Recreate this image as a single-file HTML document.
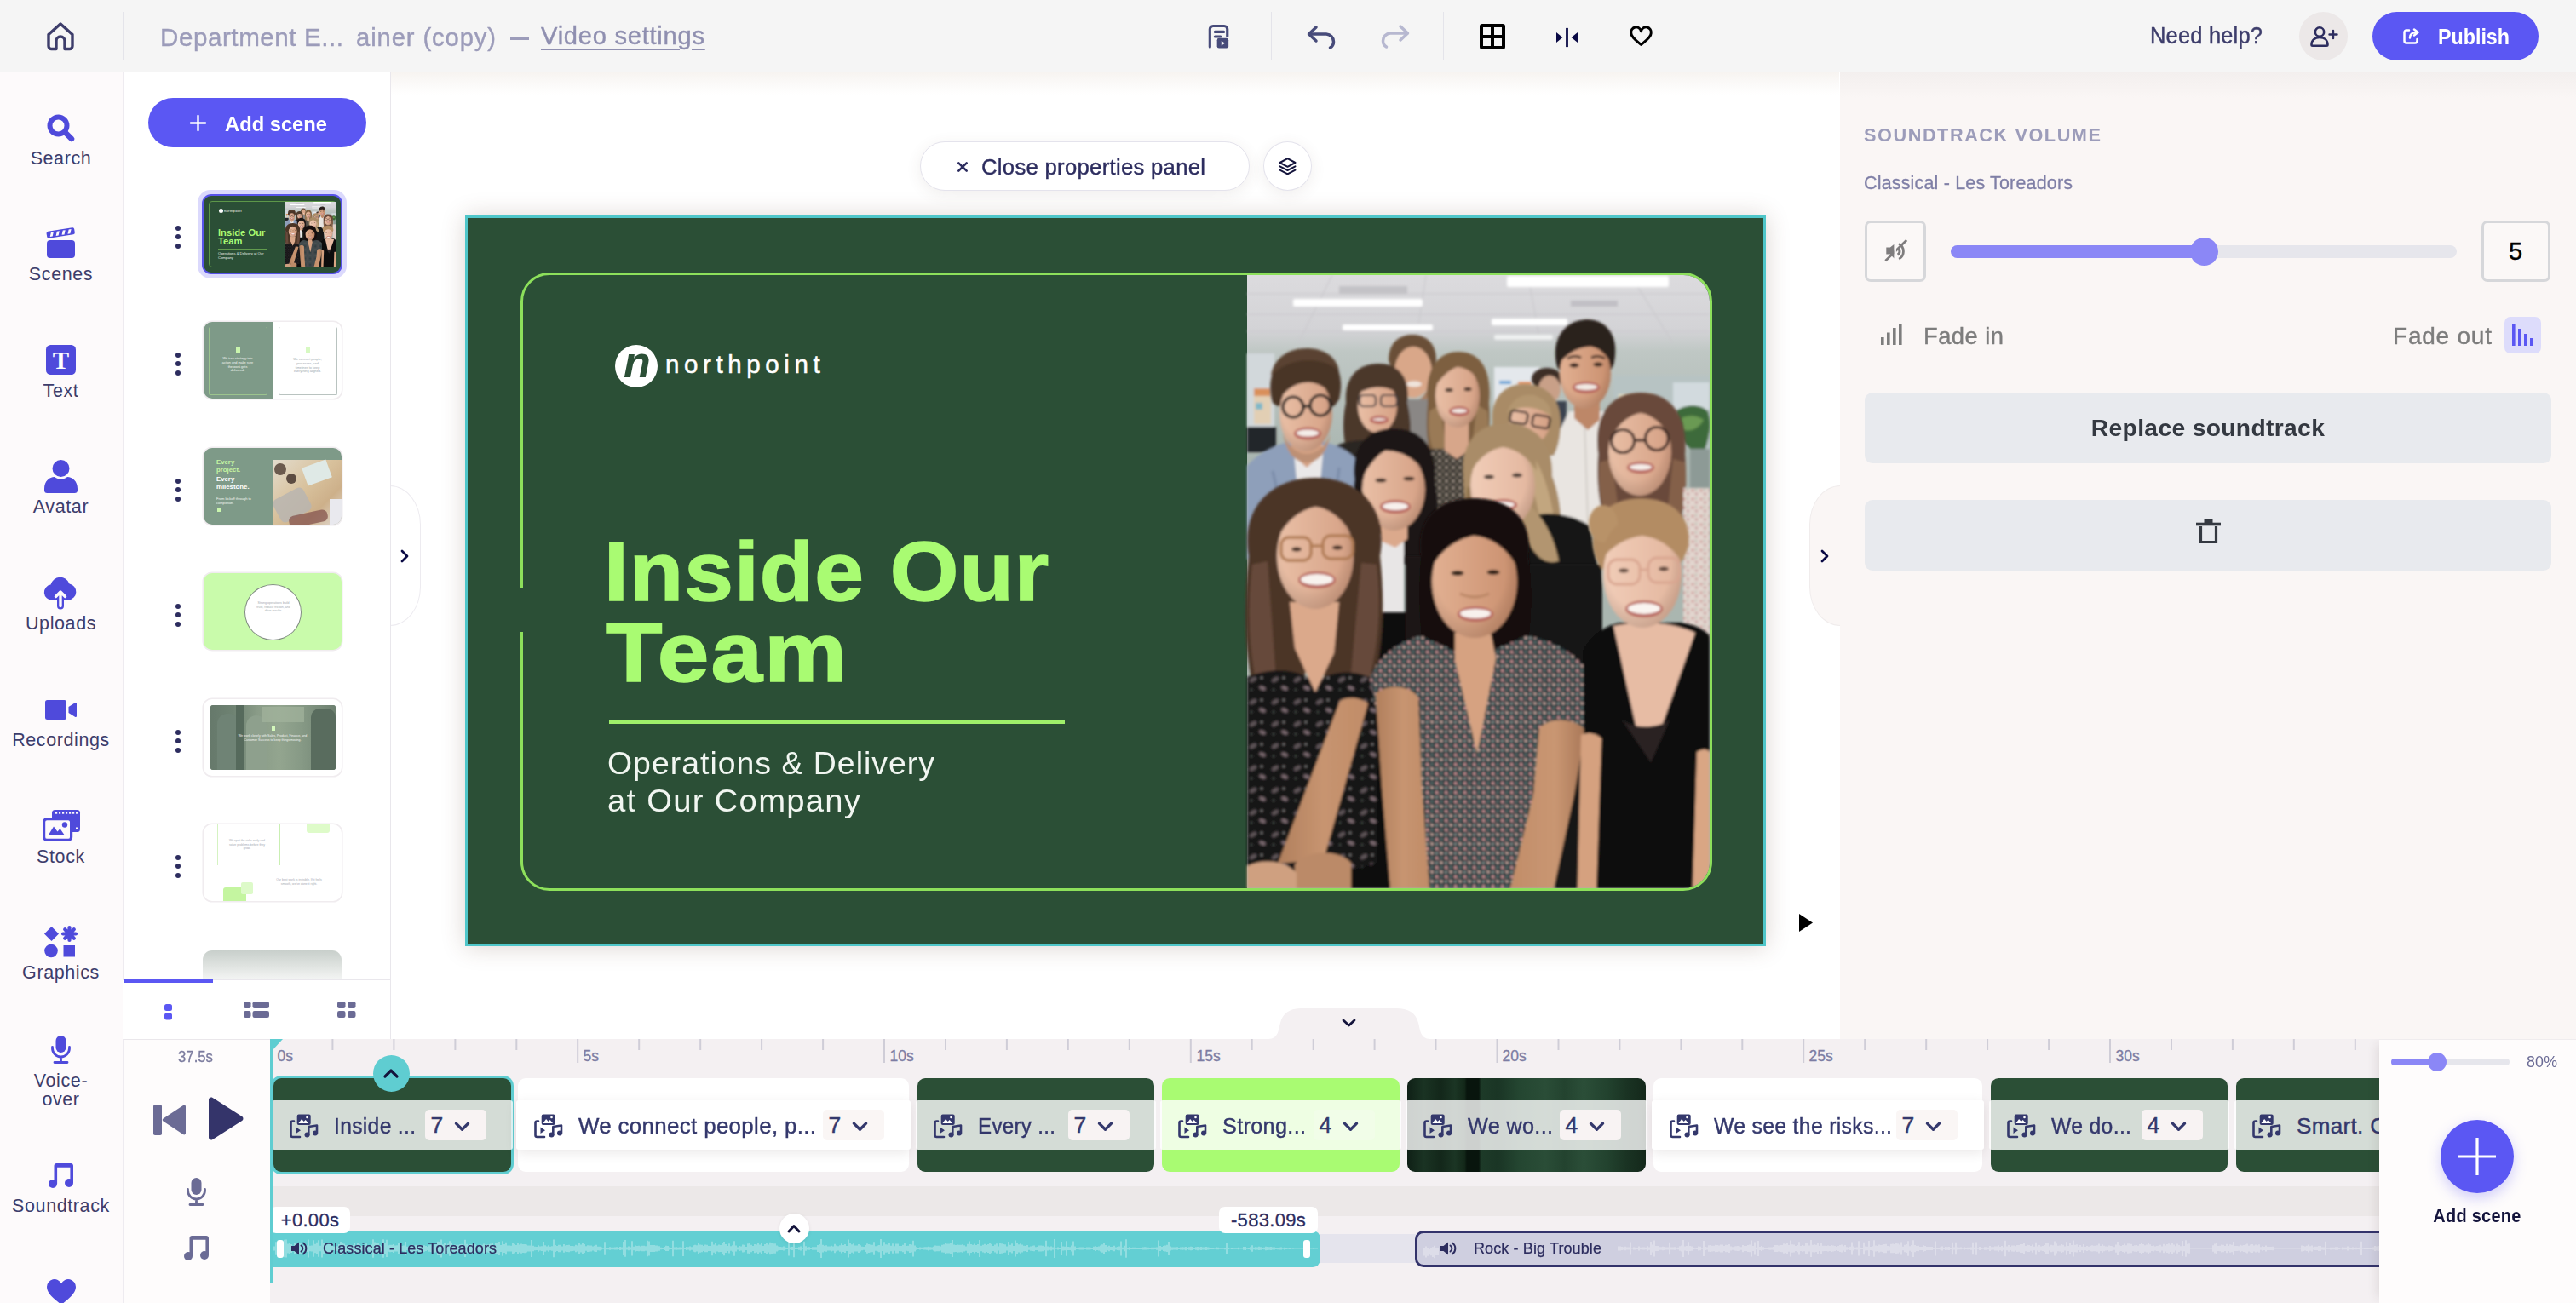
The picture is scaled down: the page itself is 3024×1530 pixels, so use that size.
<!DOCTYPE html>
<html lang="en">
<head>
<meta charset="utf-8">
<title>Video editor</title>
<style>
*{box-sizing:border-box;margin:0;padding:0}
html,body{width:3024px;height:1530px;overflow:hidden;background:#fff}
body{font-family:"Liberation Sans",sans-serif;color:#2d2d5f;position:relative}
.abs{position:absolute}
svg{display:block;overflow:visible}
.t{position:absolute;white-space:nowrap;line-height:1}
/* ---------- top bar ---------- */
#topbar{left:0;top:0;width:3024px;height:85px;background:#f5f5f5;border-bottom:1px solid #e9e2e2;z-index:30}
.vdiv{position:absolute;top:14px;width:1px;height:57px;background:#e4e4ea}
/* ---------- sidebar ---------- */
#sidebar{left:0;top:85px;width:144px;height:1445px;background:#fdfafb;z-index:20}
.sb-lab{position:absolute;left:0;width:143px;text-align:center;font-size:21.5px;color:#3d3d6b;line-height:21px;letter-spacing:.6px}
.sb-ico{position:absolute}
/* ---------- scenes panel ---------- */
#scenes{left:144px;top:85px;width:315px;height:1135px;background:#fff;border-right:1px solid #e9e7ec;box-shadow:inset 1px 0 0 #eeebf0;z-index:10;overflow:hidden}
.thumb{position:absolute;left:95px;width:162px;height:90px;border-radius:10px;overflow:hidden;box-shadow:0 0 0 1.500px #f0ecef}
.dots{position:absolute;left:62px;width:6px}
.dots i{display:block;width:6px;height:6px;border-radius:50%;background:#2d2d5f;margin-bottom:4.5px}
/* ---------- workspace ---------- */
#work{left:459px;top:85px;width:1700px;height:1135px;background:linear-gradient(#f7f4f1 0,#fff 26px);z-index:5}
/* ---------- props ---------- */
#props{left:2160px;top:85px;width:864px;height:1135px;background:linear-gradient(#f3efee 0,#faf6f5 30px);z-index:6}
/* ---------- timeline ---------- */
#tl{left:144px;top:1220px;width:2880px;height:310px;background:#f4f0f2;z-index:8;overflow:hidden}

.rl{font-size:17.500px;color:#7d7da3;letter-spacing:0;-webkit-text-stroke:.3px #7d7da3;margin-left:1.500px}
.clip{height:110px;border-radius:9px}
.band{height:58px;border-radius:3px}
.ci{top:14.500px;margin-left:2.300px}
.ct{top:16.500px;font-size:26px;color:#34386c;letter-spacing:.35px;transform-origin:0 0;-webkit-text-stroke:.4px #34386c}
.db{top:11px;width:72px;height:36px;border-radius:5px}
.db span{position:absolute;left:6.500px;top:5px;font-size:26.500px;line-height:1;color:#34386c;-webkit-text-stroke:.45px #34386c}
.db svg{position:absolute;left:33.500px;top:13.500px}
.tlab{height:31px;border-radius:7px;background:#fff;font-size:22px;line-height:31px;text-align:center;color:#2d2d5f;letter-spacing:.3px;-webkit-text-stroke:.3px #2d2d5f}
</style>
</head>
<body>
<svg width="0" height="0" style="position:absolute"><defs><g id="photo">
<defs>
<linearGradient id="bgw" x1="0" y1="0" x2="0" y2="1"><stop offset="0" stop-color="#dcdbde"/><stop offset=".09" stop-color="#d3d3d6"/><stop offset=".125" stop-color="#bfc7c4"/><stop offset=".3" stop-color="#aab6b0"/></linearGradient>
<linearGradient id="skA" x1="0" y1="0" x2="1" y2="0"><stop offset="0" stop-color="#e9bfa6"/><stop offset="1" stop-color="#d5a084"/></linearGradient>
<linearGradient id="skB" x1="0" y1="0" x2="1" y2="0"><stop offset="0" stop-color="#e2b092"/><stop offset="1" stop-color="#c98f6e"/></linearGradient>
<linearGradient id="skC" x1="0" y1="0" x2="1" y2="0"><stop offset="0" stop-color="#f1cdb8"/><stop offset="1" stop-color="#e2b59d"/></linearGradient>
<pattern id="flo1" width="11" height="11" patternUnits="userSpaceOnUse"><rect width="11" height="11" fill="#223438"/><circle cx="2.600" cy="2.600" r="1.800" fill="#dd9fa0"/><circle cx="8.100" cy="7.900" r="1.700" fill="#e9c0b6"/><circle cx="8" cy="2.300" r="1.100" fill="#93a8a2"/><circle cx="2.400" cy="8.200" r="1.100" fill="#cfd6d0"/><circle cx="5.400" cy="5.400" r=".8" fill="#c98b90"/></pattern>
<pattern id="flo2" width="26" height="26" patternUnits="userSpaceOnUse"><rect width="26" height="26" fill="#141315"/><ellipse cx="7" cy="7" rx="4.500" ry="2.400" fill="#5f5458" transform="rotate(-30 7 7)"/><ellipse cx="18" cy="17" rx="4" ry="2.200" fill="#7c6a70" transform="rotate(25 18 17)"/><circle cx="17" cy="5" r="1.100" fill="#a9a3a6"/><circle cx="5" cy="19" r="1.200" fill="#49524f"/></pattern>
<pattern id="flo3" width="10" height="10" patternUnits="userSpaceOnUse"><rect width="10" height="10" fill="#e2d6cf"/><circle cx="3" cy="3" r="1.500" fill="#c98a86"/><circle cx="7.500" cy="7" r="1.300" fill="#b86f74"/><circle cx="7" cy="2" r=".9" fill="#8fa08a"/></pattern>
<pattern id="flo4" width="8" height="8" patternUnits="userSpaceOnUse"><rect width="8" height="8" fill="#3f3b36"/><circle cx="2" cy="2" r="1.400" fill="#b9ab9c"/><circle cx="6" cy="6" r="1.200" fill="#8a8274"/></pattern>
<filter id="pb" x="-5%" y="-5%" width="110%" height="110%"><feGaussianBlur stdDeviation="1.500"/></filter>
<linearGradient id="skArm" x1="0" y1="0" x2="1" y2="0"><stop offset="0" stop-color="#b07f5d"/><stop offset=".5" stop-color="#c79470"/><stop offset="1" stop-color="#c08c68"/></linearGradient><linearGradient id="skArm2" x1="0" y1="0" x2="1" y2="0"><stop offset="0" stop-color="#c18d69"/><stop offset=".6" stop-color="#c99672"/><stop offset="1" stop-color="#a87757"/></linearGradient>
<radialGradient id="fsh" cx=".45" cy=".4" r=".75"><stop offset=".55" stop-color="#000" stop-opacity="0"/><stop offset="1" stop-color="#5a2f1a" stop-opacity=".28"/></radialGradient>
</defs>
<rect width="543" height="720" fill="url(#bgw)"/>
<g filter="url(#pb)">
<!-- ceiling grid + lights -->
<g stroke="#c9c8cc" stroke-width="1.200" fill="none"><path d="M0 22h543M0 46h543M0 66h543M100 0l-40 80M210 0l-12 80M330 0l14 80M450 0l50 80"/></g>
<g fill="#fff"><rect x="305" y="1" width="190" height="13" rx="2"/><rect x="54" y="28" width="152" height="9" rx="2"/><rect x="112" y="58" width="106" height="7" rx="2"/><rect x="287" y="51" width="89" height="8" rx="2"/><rect x="290" y="70" width="69" height="6" rx="2" fill="#eef0f0"/></g>
<rect x="108" y="13" width="80" height="9" fill="#c3c2c6"/><rect x="380" y="30" width="55" height="7" fill="#c1c0c5"/>
<!-- back wall stuff -->
<rect x="0" y="92" width="32" height="112" fill="#d2d8db"/><rect x="8" y="135" width="20" height="40" fill="#e2cfb4"/><rect x="8" y="133" width="20" height="9" fill="#d98f5a"/><rect x="10" y="150" width="8" height="8" fill="#7fb8c8"/>
<rect x="0" y="178" width="34" height="30" fill="#22252a"/>
<rect x="290" y="108" width="54" height="46" fill="#e4e8ec"/><rect x="318" y="125" width="16" height="6" fill="#e49a6a"/><rect x="296" y="124" width="14" height="4" fill="#6aa6d8"/>
<rect x="430" y="118" width="113" height="86" fill="#b7c3c3"/><rect x="500" y="126" width="43" height="32" fill="#d2dade"/><rect x="436" y="140" width="40" height="8" fill="#e4e0c8"/>
<path d="M503 160c10-8 28-10 38 0 4 14 2 30-4 46-14 4-26-6-30-22-2-8-4-16-4-24z" fill="#3e6b3a"/>
<path d="M510 168c8-4 18-4 26 2-6 10-14 14-24 12z" fill="#6a9a52"/>
<rect x="520" y="204" width="23" height="48" fill="#8d9a96"/>
</g>
<g filter="url(#pb)">
<!-- P3 man back -->
<path d="M166 100c0-20 12-30 28-30s28 10 28 30l-4 12h-48z" fill="#6a5038"/>
<ellipse cx="195" cy="114" rx="22" ry="30" fill="#d9a789"/>
<path d="M175 122c4 20 12 26 20 26s16-6 20-26c-2 30-10 38-20 38s-18-8-20-38z" fill="#a67d60"/>
<ellipse cx="196" cy="128" rx="9" ry="3.500" fill="#efe4dc"/>
<rect x="178" y="146" width="38" height="56" fill="#8a8785"/>
<!-- P6 far back small -->
<ellipse cx="352" cy="122" rx="18" ry="13" fill="#3d2e26"/>
<ellipse cx="355" cy="134" rx="13" ry="16" fill="#c9a088"/>
<rect x="343" y="148" width="32" height="46" fill="#3b4250"/>
<!-- P7 tall man -->
<path d="M356 204 378 160h48l8 44 6 96h-84z" fill="#e9e5e1"/>
<path d="M396 170l4 120" stroke="#d2cdc8" stroke-width="2" fill="none"/>
<path d="M384 140h30v30l-14 12-16-14z" fill="#bd8767"/>
<path d="M364 108c-8-30 6-54 34-56 26 0 40 22 32 54l-6 10h-54z" fill="#2b201b"/>
<ellipse cx="397" cy="116" rx="30" ry="41" fill="url(#skB)"/><ellipse cx="397" cy="116" rx="30" ry="41" fill="url(#fsh)"/>
<path d="M366 104c2-24 16-34 32-34 18 0 30 12 30 34-8-12-14-18-24-20-14 0-26 6-38 20z" fill="#2b201b"/>
<ellipse cx="398.0" cy="132.0" rx="16.0" ry="7.0" fill="#b8645c"/><ellipse cx="398.0" cy="131.5" rx="13.0" ry="3.5" fill="#f3ece6"/>
<ellipse cx="384" cy="106" rx="5.500" ry="2.600" fill="#2a1c16"/><ellipse cx="412" cy="105" rx="5.500" ry="2.600" fill="#2a1c16"/>
<path d="M376 98q8-5 16-1M404 97q8-4 16 1" stroke="#2a1c16" stroke-width="2.600" fill="none"/>
<!-- P2 glasses long hair -->
<path d="M116 150c-2-30 14-46 38-46s38 16 34 46c4 18 6 34 0 52h-72c-4-16-4-34 0-52z" fill="#4c392b"/>
<ellipse cx="153" cy="154" rx="23" ry="31" fill="url(#skA)"/>
<path d="M128 140c4-18 16-26 28-24 14 2 20 10 22 24-12-10-30-12-50 0z" fill="#4c392b"/>
<g fill="none" stroke="#3a3a40" stroke-width="2.200"><rect x="132" y="141" width="19" height="13" rx="4"/><rect x="157" y="141" width="19" height="13" rx="4"/></g>
<ellipse cx="155.0" cy="170.0" rx="11.0" ry="5.0" fill="#b8645c"/><ellipse cx="155.0" cy="169.5" rx="8.0" ry="1.5" fill="#f0e6e0"/>
<path d="M98 204c20-14 64-14 94 0v22H98z" fill="#2a2523"/>
<!-- P5 blonde with glasses -->
<path d="M288 172c-2-28 14-44 38-44s42 16 42 44c0 16-2 28-8 40h-68c-4-12-4-26-4-40z" fill="#a98b66"/>
<ellipse cx="332" cy="170" rx="24" ry="29" fill="url(#skA)"/>
<path d="M305 162c6-18 20-24 34-20 12 4 18 12 18 24-16-12-34-14-52-4z" fill="#b3966f"/>
<g fill="none" stroke="#2e2422" stroke-width="2.400"><rect x="309" y="160" width="20" height="14" rx="4" transform="rotate(10 319 167)"/><rect x="335" y="165" width="20" height="14" rx="4" transform="rotate(10 345 172)"/></g>
<!-- P4 woman center -->
<path d="M212 150c-4-36 10-60 36-60s40 22 36 60c2 22 0 42-6 62h-62c-6-18-6-40-4-62z" fill="#7d5e3f"/>
<path d="M214 160c-2 20 0 36 6 50l14-8-8-50zM282 160c2 18 0 34-6 50l-12-10 6-48z" fill="#9a7a56"/>
<rect x="214" y="204" width="50" height="72" fill="url(#flo4)"/>
<path d="M232 172h28v34l-14 10-14-10z" fill="#d7a68a"/>
<ellipse cx="247" cy="142" rx="26" ry="37" fill="url(#skA)"/><ellipse cx="247" cy="142" rx="26" ry="37" fill="url(#fsh)"/>
<path d="M220 132c2-26 14-36 28-36 16 0 26 12 28 32-10-14-20-20-30-20-10 4-18 12-26 24z" fill="#7d5e3f"/>
<ellipse cx="249.0" cy="160.0" rx="12.0" ry="6.0" fill="#b8645c"/><ellipse cx="249.0" cy="159.5" rx="9.0" ry="2.5" fill="#f4ece7"/>
<ellipse cx="237" cy="135" rx="4.500" ry="2.200" fill="#3a2a20"/><ellipse cx="259" cy="134" rx="4.500" ry="2.200" fill="#3a2a20"/>
<!-- P1 man left -->
<path d="M0 224c14-16 34-26 50-28h40c20 4 36 14 46 30l-4 108H0z" fill="#8e9fba"/>
<path d="M30 230l16 70M108 226l-10 80" stroke="#7a8ba8" stroke-width="3" fill="none"/>
<path d="M54 200h36l-4 42-14 8-14-10z" fill="#eae8e8"/>
<path d="M52 186h36v24l-18 16-18-16z" fill="#d4a183"/>
<path d="M30 150c-10-34 8-62 40-62 30 0 46 24 38 58l-6 8H36z" fill="#4a3426"/><path d="M28 118c4-22 22-32 42-32 18 0 34 8 38 26-10-8-22-12-36-12-16 0-32 6-44 18z" fill="#5a4232"/>
<ellipse cx="69" cy="163" rx="31" ry="44" fill="url(#skA)"/><ellipse cx="69" cy="163" rx="31" ry="44" fill="url(#fsh)"/>
<path d="M36 148c0-28 14-42 34-42s34 14 34 40c-8-12-20-20-32-20-14 0-26 8-36 22z" fill="#4a3426"/>
<g fill="none" stroke="#1e1b1c" stroke-width="3.200"><circle cx="54" cy="155" r="12"/><circle cx="86" cy="153" r="12"/><path d="M66 154h8"/></g>
<ellipse cx="71.0" cy="186.0" rx="16.0" ry="7.5" fill="#b8645c"/><ellipse cx="71.0" cy="185.5" rx="13.0" ry="4.0" fill="#f5efea"/>
<path d="M42 186c6 16 18 24 28 24s22-8 28-24c-4 22-14 34-28 34s-24-12-28-34z" fill="#bd9075"/>
<!-- P8 woman right w glasses -->
<path d="M412 210c-6-44 14-72 50-72s56 28 52 72c2 30 2 54-6 80h-88c-8-26-10-50-8-80z" fill="#69493a"/>
<path d="M414 220c-2 26 0 46 8 66l14-10-8-60zM514 220c2 24 0 46-6 66l-14-10 6-60z" fill="#84614a"/>
<rect x="512" y="250" width="31" height="180" fill="url(#flo3)"/>
<ellipse cx="461" cy="208" rx="37" ry="51" fill="url(#skA)"/><ellipse cx="461" cy="208" rx="37" ry="51" fill="url(#fsh)"/>
<path d="M424 196c0-34 16-52 38-52 24 0 38 18 38 52-10-20-24-32-38-34-14 2-28 14-38 34z" fill="#69493a"/>
<g fill="none" stroke="#3a2824" stroke-width="3.200"><circle cx="441" cy="195" r="13.500"/><circle cx="481" cy="192" r="13.500"/><path d="M454.500 194h13"/></g>
<ellipse cx="462.0" cy="226.0" rx="16.0" ry="7.0" fill="#b8645c"/><ellipse cx="462.0" cy="225.5" rx="13.0" ry="3.5" fill="#f6eeea"/>
<!-- P9 asian woman left-mid -->
<path d="M126 240c-4-40 16-60 46-60s52 20 48 60c6 36 6 70-2 100h-84c-10-30-12-64-8-100z" fill="#1b1513"/>
<path d="M140 304h44v96h-34z" fill="#e8e6e6"/>
<path d="M156 290h32v20l-14 10-18-8z" fill="#dba98c"/>
<ellipse cx="172" cy="252" rx="37" ry="48" fill="url(#skA)"/><ellipse cx="172" cy="252" rx="37" ry="48" fill="url(#fsh)"/>
<path d="M134 240c2-36 18-52 40-52 20 0 36 16 38 48-12-18-28-30-50-30-10 6-20 18-28 34z" fill="#1b1513"/>
<ellipse cx="174.0" cy="272.0" rx="18.0" ry="8.0" fill="#b8645c"/><ellipse cx="174.0" cy="271.5" rx="15.0" ry="4.5" fill="#f7f0ec"/>
<ellipse cx="157" cy="241" rx="6.500" ry="2.300" fill="#2a1c16"/><ellipse cx="190" cy="239" rx="6.500" ry="2.300" fill="#2a1c16"/>
<!-- P10 blonde center -->
<path d="M254 236c-4-40 18-62 50-62s56 22 54 62c10 24 14 60 8 100h-40l-60-30c-8-20-12-44-12-70z" fill="#a98c67"/>
<path d="M326 200c20 20 34 60 40 130l-16 4c-4-50-14-90-30-120z" fill="#c2a67f"/>
<path d="M258 250c-2 20 2 36 8 50l12-6-10-50z" fill="#8f744f"/>
<path d="M320 288c24-12 56-10 82 6l14 70v100h-100z" fill="#141414"/>
<path d="M322 262c18 14 36 34 44 74-20 6-34-12-44-42z" fill="#b29570"/>
<ellipse cx="300" cy="248" rx="38" ry="50" fill="url(#skC)"/><ellipse cx="300" cy="248" rx="38" ry="50" fill="url(#fsh)"/>
<path d="M262 232c2-36 20-52 42-52 22 2 36 20 36 50-10-16-24-26-40-28-14 2-28 12-38 30z" fill="#a98c67"/>
<ellipse cx="301.0" cy="270.0" rx="16.0" ry="7.0" fill="#b8645c"/><ellipse cx="301.0" cy="269.5" rx="13.0" ry="3.5" fill="#f7efeb"/>
<ellipse cx="284" cy="237" rx="6" ry="2.500" fill="#4a3a34"/><ellipse cx="317" cy="235" rx="6" ry="2.500" fill="#4a3a34"/>
</g>
<g filter="url(#pb)">
<!-- dark base between front-row people -->
<rect x="112" y="396" width="100" height="324" fill="#0e0e0f"/>
<rect x="326" y="340" width="90" height="380" fill="#121212"/>
<rect x="186" y="330" width="30" height="100" fill="#1a1615"/>
<!-- P11 bottom-left woman -->
<path d="M2 330c-10-56 26-92 78-92s86 36 76 92c6 56 4 110-10 158H96l-16-50-20 50H8C-4 440-4 386 2 330z" fill="#4b3425"/>
<path d="M6 340c-6 50-4 100 6 146l22-10-10-140zM152 340c6 48 2 96-10 140l-20-12 12-130z" fill="#66493a"/>
<path d="M0 472c30-12 60-10 80 6 20-14 46-16 72-2v214l-40 12H0z" fill="url(#flo2)"/>
<path d="M50 384h58l-6 60-22 46-24-52z" fill="#dba98b"/>
<ellipse cx="80" cy="330" rx="45" ry="62" fill="url(#skA)"/><ellipse cx="80" cy="330" rx="45" ry="62" fill="url(#fsh)"/>
<path d="M34 312c2-42 22-58 48-58 26 2 44 22 44 56-12-22-28-36-46-38-18 4-34 16-46 40z" fill="#4b3425"/>
<g fill="none" stroke="#b07c54" stroke-width="3.400"><rect x="40" y="308" width="35" height="27" rx="9"/><rect x="89" y="306" width="35" height="27" rx="9"/><path d="M75 318h14"/></g>
<ellipse cx="82.0" cy="358.0" rx="22.0" ry="10.0" fill="#b8645c"/><ellipse cx="82.0" cy="357.5" rx="19.0" ry="6.5" fill="#f8f2ee"/>
<ellipse cx="58" cy="322" rx="6" ry="2.600" fill="#3a261c"/><ellipse cx="106" cy="320" rx="6" ry="2.600" fill="#3a261c"/>
<path d="M109 500c10-6 24-4 33 3L90 686l-54 5z" fill="url(#skArm)"/>
<path d="M56 692c14-18 52-18 66-2v30H56z" fill="#bb8a68"/><path d="M0 694c20-10 46-6 58 8v18H0z" fill="#cfa080"/>
<path d="M0 520c20 0 56 30 56 80l-18 84H0z" fill="url(#flo2)"/>
<!-- P12 center woman -->
<path d="M204 330c-6-44 20-68 62-68s70 24 64 68c6 46 4 92-8 138h-34l-22-30-24 34h-30c-10-48-12-96-8-142z" fill="#17110f"/>
<path d="M144 474c10-30 40-46 60-50l46 20h30l48-20c30 4 64 20 84 60l-14 62-44-10 8 184H196l4-186-40 16z" fill="url(#flo1)"/>
<path d="M244 420h42l6 30-22 112-26-110z" fill="#d6a281"/>
<ellipse cx="267" cy="360" rx="50" ry="66" fill="url(#skB)"/><ellipse cx="267" cy="360" rx="50" ry="66" fill="url(#fsh)"/>
<path d="M216 344c2-42 24-60 52-60 28 2 48 24 50 60-12-22-30-36-52-38-20 4-38 16-50 38z" fill="#17110f"/>
<ellipse cx="268.0" cy="398.0" rx="21.0" ry="9.0" fill="#b8645c"/><ellipse cx="268.0" cy="397.5" rx="18.0" ry="5.5" fill="#f8f1ed"/>
<ellipse cx="247" cy="350" rx="7.500" ry="2.800" fill="#22140f"/><ellipse cx="289" cy="349" rx="7.500" ry="2.800" fill="#22140f"/>
<path d="M250 374q17 8 34 0" stroke="#b88463" stroke-width="3" fill="none"/>
<path d="M151 492c10-12 40-12 50 4l4 104 9 120h-46l-10-120z" fill="url(#skArm)"/>
<path d="M343 532c13-14 42-12 54 2l-13 76-24 110h-51l27-110z" fill="url(#skArm2)"/>
<!-- P13 bottom-right woman -->
<path d="M406 320c-4-36 20-58 56-58s60 20 56 56c-4 14-10 22-16 28h-84c-6-6-10-14-12-26z" fill="#b38c63"/>
<ellipse cx="418" cy="292" rx="17" ry="22" fill="#b89268"/>
<path d="M394 442c10-20 30-32 44-34h70c16 2 30 8 35 16v296H398z" fill="#111111"/>
<path d="M430 412c30-6 66-6 96 8l-40 112-14 26-16-30z" fill="#e7bca4"/>
<path d="M440 522c10 10 40 12 56 0l-22 50z" fill="#2a2223"/>
<ellipse cx="464" cy="352" rx="46" ry="62" fill="url(#skC)"/><ellipse cx="464" cy="352" rx="46" ry="62" fill="url(#fsh)"/>
<path d="M416 334c4-36 24-50 48-50 26 2 44 20 46 52-12-18-28-28-46-30-18 2-36 12-48 28z" fill="#b38c63"/>
<g fill="none" stroke="#d9a590" stroke-width="2.800"><rect x="424" y="334" width="37" height="29" rx="10"/><rect x="471" y="332" width="37" height="29" rx="10"/><path d="M461 346h10"/></g>
<ellipse cx="442" cy="347" rx="6" ry="2.600" fill="#5a4238"/><ellipse cx="489" cy="345" rx="6" ry="2.600" fill="#5a4238"/>
<ellipse cx="466.0" cy="392.0" rx="22.0" ry="10.0" fill="#b8645c"/><ellipse cx="466.0" cy="391.5" rx="19.0" ry="6.5" fill="#faf4f0"/>
<path d="M392 540c8-4 18-2 24 4l-6 176h-22z" fill="#d5a17f"/>
<path d="M528 560c6-4 12-4 15 0v160h-20z" fill="#d9a684"/>
</g>
</g></defs></svg>

<!-- ================= TOP BAR ================= -->
<div id="topbar" class="abs">
  <div class="vdiv" style="left:144px"></div>
  <svg class="abs" style="left:54px;top:25px" width="34" height="35" viewBox="0 0 34 35" fill="none" stroke="#3d3d6b" stroke-width="3.4" stroke-linejoin="round" stroke-linecap="round"><path d="M3 15.5 17 3l14 12.500V29a3.500 3.500 0 0 1-3.500 3.500H22V23a5 5 0 0 0-10 0v9.500H6.500A3.500 3.500 0 0 1 3 29z"/></svg>
  <div class="t" id="ttl1" style="left:188px;top:30px;font-size:29px;color:#9c9cba;letter-spacing:.55px;-webkit-text-stroke:.4px #9c9cba;transform:scaleX(1.0200);transform-origin:0 0">Department E...</div>
  <div class="t" id="ttl2" style="left:418px;top:30px;font-size:29px;color:#9c9cba;letter-spacing:.9px;-webkit-text-stroke:.4px #9c9cba;transform:scaleX(1.0060);transform-origin:0 0">ainer (copy)</div>
  <div class="abs" style="left:599px;top:44px;width:22px;height:2.500px;background:#9c9cba"></div>
  <div class="t" id="ttl3" style="left:635px;top:28px;font-size:29px;color:#8f8fb0;letter-spacing:.75px;text-decoration:underline;text-decoration-thickness:2px;text-underline-offset:5px;-webkit-text-stroke:.4px #8f8fb0;transform:scaleX(1.0031);transform-origin:0 0">Video settings</div>
  <!-- script icon -->
  <svg class="abs" style="left:1418px;top:28px" width="26" height="30" viewBox="0 0 28 31" fill="none" stroke="#474b7a" stroke-width="3.400" stroke-linecap="round" stroke-linejoin="round"><path d="M2.500 28.500V6a4 4 0 0 1 4-4h14a4 4 0 0 1 4 4v9"/><path d="M9 9.500h11M9 15.500h7"/><rect x="11.500" y="17.500" width="14.500" height="12.500" rx="2.500" fill="#474b7a" stroke="none"/><path d="M17 20.800v6l4.500-3z" fill="#f5f5f5" stroke="none"/></svg>
  <div class="vdiv" style="left:1492px"></div>
  <!-- undo -->
  <svg class="abs" style="left:1533.500px;top:30px" width="35" height="28" viewBox="0 0 35 28" fill="none" stroke="#474b7a" stroke-width="3.500" stroke-linecap="round" stroke-linejoin="round"><path d="M11 2 2.500 10 11 18"/><path d="M3 10h20a9 9 0 0 1 8.500 9c0 3-1.500 5.500-4 7"/></svg>
  <!-- redo -->
  <svg class="abs" style="left:1619.500px;top:29px" width="35" height="28" viewBox="0 0 35 28" fill="none" stroke="#b7b8d0" stroke-width="3.500" stroke-linecap="round" stroke-linejoin="round"><path d="M24 2l8.500 8L24 18"/><path d="M32 10H12a9 9 0 0 0-8.500 9c0 3 1.500 5.500 4 7"/></svg>
  <div class="vdiv" style="left:1694px"></div>
  <!-- grid -->
  <svg class="abs" style="left:1737px;top:28px" width="30" height="30" viewBox="0 0 30 30" fill="none" stroke="#000" stroke-width="4"><rect x="2" y="2" width="26" height="26" rx="1"/><path d="M15 2v26M2 15h26"/></svg>
  <!-- split -->
  <svg class="abs" style="left:1826.500px;top:32px" width="25" height="24" viewBox="0 0 27 24" fill="#0a0a45"><rect x="12" y="0" width="3" height="24"/><path d="M0 5.500 8 12 0 18.500zM27 5.500 19 12l8 6.500z"/></svg>
  <!-- heart -->
  <svg class="abs" style="left:1913px;top:31px" width="27" height="24" viewBox="0 0 30 26" fill="none" stroke="#000" stroke-width="3.300" stroke-linejoin="round"><path d="M15 23.500C8.500 18 2 13.500 2 8.500A6.500 6.500 0 0 1 15 6a6.500 6.500 0 0 1 13 2.500c0 5-6.500 9.500-13 15z"/></svg>
  <div class="t" id="help" style="left:2524px;top:29px;font-size:27px;color:#3d3d6b;letter-spacing:0.2px;-webkit-text-stroke:.45px #3d3d6b;transform:scaleX(0.9434);transform-origin:0 0">Need help?</div>
  <div class="abs" style="left:2699px;top:14px;width:57px;height:57px;border-radius:50%;background:#ece8e8"></div>
  <svg class="abs" style="left:2712px;top:31px" width="33" height="24" viewBox="0 0 33 24" fill="none" stroke="#2d2d5f" stroke-width="2.600" stroke-linecap="round" stroke-linejoin="round"><circle cx="11" cy="6.500" r="5.200"/><path d="M1.500 21.500c0-5.500 4-8.500 9.500-8.500s9.500 3 9.500 8.500c0 .8-.6 1.200-1.300 1.200H2.800c-.7 0-1.300-.4-1.300-1.200z"/><path d="M27 5v9M22.500 9.500h9" stroke-width="2.400"/></svg>
  <div class="abs" style="left:2785px;top:14px;width:195px;height:57px;border-radius:29px;background:#5b57f3"></div>
  <svg class="abs" style="left:2821px;top:33px" width="21" height="19" viewBox="0 0 21 19" fill="none" stroke="#fff" stroke-width="2.500" stroke-linecap="round" stroke-linejoin="round"><path d="M7 2.500H4a2.500 2.500 0 0 0-2.500 2.500v10A2.500 2.500 0 0 0 4 17.500h10a2.500 2.500 0 0 0 2.500-2.500v-2"/><path d="M8 11.500c0-4.500 3-6.500 8-6.500M13 1.500l4.500 3.500-4.500 3.500" /></svg>
  <div class="t" id="pub" style="left:2862px;top:30px;font-size:26px;font-weight:bold;color:#fff;letter-spacing:0px;transform:scaleX(0.8945);transform-origin:0 0">Publish</div>
</div>

<!-- ================= SIDEBAR ================= -->
<div id="sidebar" class="abs">
  <!-- Search -->
  <svg class="sb-ico" style="left:55px;top:49px" width="33" height="33" viewBox="0 0 33 33" fill="none" stroke="#4f4adb" stroke-linecap="round"><circle cx="13.500" cy="13.500" r="10" stroke-width="6"/><path d="M21.500 21.500 29 29" stroke-width="6.500"/></svg>
  <div class="sb-lab" style="top:91px">Search</div>
  <!-- Scenes -->
  <svg class="sb-ico" style="left:55px;top:183px" width="34" height="36" viewBox="0 0 34 36" fill="#4f4adb"><rect x="0" y="14" width="33" height="21" rx="4"/><g transform="rotate(-9 1 12)"><rect x="0.500" y="4" width="33" height="8" rx="2"/><g fill="#fdfafb"><path d="M6 5.500h3l-2 5h-3zM13 5.500h3l-2 5h-3zM20 5.500h3l-2 5h-3zM27 5.500h3l-2 5h-3z"/></g></g></svg>
  <div class="sb-lab" style="top:227px">Scenes</div>
  <!-- Text -->
  <svg class="sb-ico" style="left:54px;top:320px" width="35" height="35" viewBox="0 0 35 35"><rect width="35" height="35" rx="5.500" fill="#4f4adb"/><text x="17.500" y="27.500" text-anchor="middle" font-family="Liberation Serif,serif" font-weight="bold" font-size="29" fill="#fff">T</text></svg>
  <div class="sb-lab" style="top:364px">Text</div>
  <!-- Avatar -->
  <svg class="sb-ico" style="left:52px;top:455px" width="39" height="39" viewBox="0 0 39 39" fill="#4f4adb"><circle cx="19.500" cy="10" r="10"/><path d="M0 34c0-9 6-14 12-14 2.500 2 5 2.500 7.500 2.500S24.500 22 27 20c6 0 12 5 12 14v1.500a3.500 3.500 0 0 1-3.500 3.500h-32A3.500 3.500 0 0 1 0 35.500z"/></svg>
  <div class="sb-lab" style="top:500px">Avatar</div>
  <!-- Uploads -->
  <svg class="sb-ico" style="left:52px;top:593px" width="38" height="37" viewBox="0 0 38 37"><path fill="#4f4adb" d="M9 26.500a9 9 0 0 1-1.500-17.900A11.500 11.500 0 0 1 29.500 7.500 9.600 9.600 0 0 1 28.500 26.500z"/><path d="M19 33.500V18M13 22.500l6-6 6 6" fill="none" stroke="#4f4adb" stroke-width="8" stroke-linecap="round" stroke-linejoin="round"/><path d="M19 33.500V17.500M13.500 22.500l5.500-5.500 5.500 5.500" fill="none" stroke="#fdfafb" stroke-width="3.400" stroke-linecap="round" stroke-linejoin="round"/></svg>
  <div class="sb-lab" style="top:637px">Uploads</div>
  <!-- Recordings -->
  <svg class="sb-ico" style="left:53px;top:737px" width="37" height="23" viewBox="0 0 37 23" fill="#4f4adb"><rect width="25" height="23" rx="2.500"/><path d="M27.500 8 35 3.200c.9-.6 2-.1 2 1v14.600c0 1.100-1.100 1.600-2 1L27.500 15z"/></svg>
  <div class="sb-lab" style="top:774px">Recordings</div>
  <!-- Stock -->
  <svg class="sb-ico" style="left:50px;top:866px" width="44" height="37" viewBox="0 0 44 37"><rect x="11" y="0" width="33" height="26" rx="3.500" fill="#4f4adb"/><g fill="#fdfafb"><rect x="15" y="2.500" width="2.200" height="2.200"/><rect x="19" y="2.500" width="2.200" height="2.200"/><rect x="23" y="2.500" width="2.200" height="2.200"/><rect x="27" y="2.500" width="2.200" height="2.200"/><rect x="31" y="2.500" width="2.200" height="2.200"/><rect x="35" y="2.500" width="2.200" height="2.200"/><rect x="39" y="2.500" width="2.200" height="2.200"/><rect x="39" y="20.500" width="2.200" height="2.200"/></g><rect x="1.600" y="10.600" width="32" height="24.800" rx="3.500" fill="#fdfafb" stroke="#4f4adb" stroke-width="3.200"/><circle cx="26" cy="17.500" r="3.200" fill="#4f4adb"/><path d="M6.500 30 13 19.500l4.500 6 3-3.500 5.500 8z" fill="#4f4adb"/></svg>
  <div class="sb-lab" style="top:911px">Stock</div>
  <!-- Graphics -->
  <svg class="sb-ico" style="left:52px;top:1003px" width="39" height="37" viewBox="0 0 39 37" fill="#4f4adb"><path d="M8.500 0 17 8.500 8.500 17 0 8.500z"/><circle cx="8" cy="28.500" r="7.800"/><rect x="22.500" y="22" width="13.500" height="13.500"/><g stroke="#4f4adb" stroke-width="4.200" stroke-linecap="round"><path d="M29.500 1v15M22 8.500h15M24.200 3.200l10.600 10.600M34.800 3.200 24.200 13.800"/></g></svg>
  <div class="sb-lab" style="top:1047px">Graphics</div>
  <!-- Voice-over -->
  <svg class="sb-ico" style="left:60px;top:1131px" width="23" height="33" viewBox="0 0 23 33" fill="none" stroke="#4f4adb" stroke-linecap="round"><rect x="5.500" y="0" width="12" height="20" rx="6" fill="#4f4adb" stroke="none"/><path d="M1.500 13.500v1.500a10 10 0 0 0 20 0v-1.500M11.500 25.500v5M4 31.500h15" stroke-width="2.800"/></svg>
  <div class="sb-lab" style="top:1174px;line-height:21.500px">Voice-<br>over</div>
  <!-- Soundtrack -->
  <svg class="sb-ico" style="left:57px;top:1281px" width="30" height="29" viewBox="0 0 30 29" fill="#4f4adb"><circle cx="5" cy="24" r="5"/><circle cx="24" cy="23" r="5"/><path d="M6.500 24V2.800C6.500 1.200 7.700 0 9.300 0H26.200C27.800 0 29 1.200 29 2.800V23h-3.600V4.800H10.100V24z"/></svg>
  <div class="sb-lab" style="top:1321px">Soundtrack</div>
  <!-- Heart -->
  <svg class="sb-ico" style="left:55px;top:1417px" width="34" height="30" viewBox="0 0 34 30" fill="#4f4adb"><path d="M17 30C9 23.500 0 17 0 9A9 9 0 0 1 17 5 9 9 0 0 1 34 9c0 8-9 14.500-17 21z"/></svg>
</div>

<!-- ================= SCENES PANEL ================= -->
<div id="scenes" class="abs">
  <div class="abs" style="left:30px;top:30px;width:256px;height:58px;border-radius:29px;background:#5b57f3"></div>
  <svg class="abs" style="left:79px;top:50px" width="19" height="19" viewBox="0 0 19 19" stroke="#fff" stroke-width="2.400" stroke-linecap="round"><path d="M9.500 1v17M1 9.500h17"/></svg>
  <div class="t" id="addsc" style="left:120px;top:49px;font-size:24px;font-weight:bold;color:#fff;letter-spacing:0px;transform:scaleX(0.9887);transform-origin:0 0">Add scene</div>

  <!-- thumb 1 (selected) -->
  <div class="dots" style="top:179.500px"><i></i><i></i><i></i></div>
  <div class="abs" style="left:88px;top:138px;width:175px;height:104px;border-radius:15px;background:#dbd9fc"></div>
  <div class="abs" style="left:93px;top:143px;width:165px;height:94px;border-radius:11px;background:#5854ea"></div>
  <div class="abs" id="th1" style="left:95px;top:145px;width:161px;height:90px;border-radius:9px;background:#2b4f36;overflow:hidden">
    <div class="abs" style="left:6px;top:6px;width:150px;height:78px;border:1px solid rgba(143,224,91,.5);border-radius:4px"></div>
    <svg class="abs" style="left:96px;top:7px" width="59" height="76" viewBox="0 0 543 720" preserveAspectRatio="none"><use href="#photo"/></svg>
    <div class="abs" style="left:18px;top:15px;width:5px;height:5px;border-radius:50%;background:#fff"></div>
    <div class="t" style="left:24px;top:15.500px;font-size:4px;color:#fff;letter-spacing:.3px">northpoint</div>
    <div class="t" style="left:17px;top:38px;font-size:11.200px;line-height:10.200px;font-weight:bold;color:#a8fa73;white-space:normal;width:70px">Inside Our Team</div>
    <div class="abs" style="left:17px;top:62px;width:57px;height:1px;background:rgba(143,220,98,.55)"></div>
    <div class="t" style="left:17px;top:65px;font-size:4.200px;line-height:5px;color:#e8efe8;white-space:normal;width:60px">Operations &amp; Delivery at Our Company</div>
  </div>

  <!-- thumb 2 -->
  <div class="dots" style="top:328.500px"><i></i><i></i><i></i></div>
  <div class="thumb" style="top:293px;background:#fff">
    <div class="abs" style="left:0;top:0;width:81px;height:92px;background:#7e9a88"></div>
    <div class="abs" style="left:6px;top:6px;width:69px;height:80px;border:1px solid #9cc48e;border-radius:2px;border-top:none"></div>
    <div class="abs" style="left:88px;top:6px;width:69px;height:80px;border:1px solid #b9c3c0;border-radius:2px;border-top:none"></div>
    <div class="abs" style="left:38px;top:30px;width:5px;height:6px;background:#c9f5ad"></div>
    <div class="abs" style="left:120px;top:30px;width:5px;height:6px;background:#d7f9c2"></div>
    <div class="t" style="left:20px;top:41px;width:40px;font-size:3.800px;line-height:4.800px;color:#f2f6f2;white-space:normal;text-align:center">We turn strategy into action and make sure the work gets delivered.</div>
    <div class="t" style="left:102px;top:42px;width:40px;font-size:3.800px;line-height:4.800px;color:#9ea8ae;white-space:normal;text-align:center">We connect people, processes, and timelines to keep everything aligned.</div>
  </div>

  <!-- thumb 3 -->
  <div class="dots" style="top:476.500px"><i></i><i></i><i></i></div>
  <div class="thumb" style="top:441px;background:#7e9a88">
    <div class="abs" style="left:81px;top:14px;width:82px;height:78px;background:linear-gradient(135deg,#e3dccd 0,#d8c19c 45%,#cdb08a 70%,#e5e0dc 100%)"></div>
    <div class="abs" style="left:83px;top:18px;width:14px;height:14px;border-radius:50%;background:#6b5a4e"></div>
    <div class="abs" style="left:97px;top:30px;width:12px;height:12px;border-radius:50%;background:#5c4c42"></div>
    <div class="abs" style="left:118px;top:18px;width:30px;height:22px;background:#dfe9e6;transform:rotate(-20deg)"></div>
    <div class="abs" style="left:84px;top:52px;width:40px;height:30px;background:#b9b5b0;transform:rotate(-28deg);border-radius:6px;opacity:.85"></div>
    <div class="abs" style="left:100px;top:76px;width:46px;height:14px;background:#8a5a52;transform:rotate(-12deg);border-radius:6px;opacity:.8"></div>
    <div class="abs" style="left:148px;top:60px;width:18px;height:32px;background:#e9e9ee"></div>
    <div class="t" style="left:15px;top:13px;font-size:7.800px;line-height:8.600px;font-weight:bold;color:#c4f5a3;white-space:normal;width:50px">Every project.</div>
    <div class="t" style="left:15px;top:33px;font-size:7.800px;line-height:8.600px;font-weight:bold;color:#fff;white-space:normal;width:60px">Every milestone.</div>
    <div class="t" style="left:15px;top:58px;font-size:4px;line-height:4.800px;color:#f2f6f2;white-space:normal;width:48px">From kickoff through to completion.</div>
    <div class="abs" style="left:16px;top:71px;width:3.500px;height:3.500px;background:#c9f5ad"></div>
  </div>

  <!-- thumb 4 -->
  <div class="dots" style="top:623.500px"><i></i><i></i><i></i></div>
  <div class="thumb" style="top:588px;background:#c9fbab">
    <div class="abs" style="left:48px;top:13px;width:67px;height:66px;border-radius:50%;background:#fff;border:1px solid #7f8a80"></div>
    <div class="t" style="left:62px;top:33px;width:40px;font-size:3.600px;line-height:4.700px;color:#a4aab0;white-space:normal;text-align:center">Strong operations build trust, reduce friction, and drive results.</div>
  </div>

  <!-- thumb 5 -->
  <div class="dots" style="top:771.500px"><i></i><i></i><i></i></div>
  <div class="thumb" style="top:736px;background:#fff">
    <div class="abs" style="left:8px;top:7px;width:147px;height:76px;border-radius:3px;overflow:hidden;background:#7d9180">
      <div class="abs" style="left:0;top:0;width:147px;height:76px;background:linear-gradient(90deg,#66796b 0,#6e8272 18%,#8a9c88 38%,#93a58f 55%,#879a86 72%,#6d8070 100%)"></div>
      <div class="abs" style="left:8px;top:10px;width:26px;height:66px;border-radius:12px 12px 0 0;background:#6f8375"></div>
      <div class="abs" style="left:30px;top:0;width:9px;height:76px;background:#566a5c"></div>
      <div class="abs" style="left:42px;top:12px;width:24px;height:64px;border-radius:12px 12px 0 0;background:#8ea08d"></div>
      <div class="abs" style="left:118px;top:4px;width:29px;height:72px;border-radius:10px 10px 0 0;background:#596c5e"></div>
      <div class="abs" style="left:60px;top:2px;width:50px;height:18px;background:#a3b39c;opacity:.7"></div>
    </div>
    <div class="abs" style="left:79.500px;top:32px;width:4px;height:4.500px;background:#d4f8bc"></div>
    <div class="t" style="left:39px;top:41px;width:84px;font-size:3.600px;line-height:4.600px;color:#f3f6f3;white-space:normal;text-align:center">We work closely with Sales, Product, Finance, and Customer Success to keep things moving.</div>
  </div>

  <!-- thumb 6 -->
  <div class="dots" style="top:918.500px"><i></i><i></i><i></i></div>
  <div class="thumb" style="top:883px;background:#fff">
    <div class="abs" style="left:16px;top:0;width:1px;height:48px;background:#d5f3c2"></div>
    <div class="abs" style="left:89px;top:0;width:1px;height:48px;background:#c9efb2"></div>
    <div class="abs" style="left:121px;top:0;width:27px;height:10px;border-radius:0 0 3px 3px;background:#defbc9"></div>
    <div class="abs" style="left:23px;top:74px;width:27px;height:18px;border-radius:3px 3px 0 0;background:#c4f5a0"></div>
    <div class="abs" style="left:44px;top:68px;width:14px;height:14px;border-radius:2px;background:#ddfac9"></div>
    <div class="t" style="left:28px;top:17px;width:46px;font-size:3.500px;line-height:4.600px;color:#a5a9b3;white-space:normal;text-align:center">We spot the risks early and solve problems before they grow.</div>
    <div class="t" style="left:84px;top:63px;width:56px;font-size:3.500px;line-height:4.600px;color:#a5a9b3;white-space:normal;text-align:center">Our best work is invisible. If it feels smooth, we’ve done it right.</div>
  </div>

  <!-- thumb 7 (cut) -->
  <div class="abs" style="left:94px;top:1031px;width:163px;height:40px;border-radius:11px 11px 0 0;background:linear-gradient(#c8cfcb 0,#dfe3e0 45%,#fbfbfb 100%)"></div>

  <!-- bottom tab bar -->
  <div class="abs" style="left:0;top:1065px;width:315px;height:70px;background:#fff;border-top:1px solid #e9e7ec"></div>
  <div class="abs" style="left:1px;top:1065px;width:105px;height:4px;background:#5b57f3"></div>
  <svg class="abs" style="left:49px;top:1094px" width="9" height="19" viewBox="0 0 9 19" fill="#5b57f3"><rect width="9" height="8" rx="2.500"/><rect y="10.500" width="9" height="8" rx="2.500"/></svg>
  <svg class="abs" style="left:142px;top:1091px" width="30" height="19" viewBox="0 0 30 19" fill="#6b6b95"><rect width="8.500" height="8" rx="2.200"/><rect x="10.500" width="19.500" height="8" rx="2.200"/><rect y="11" width="8.500" height="8" rx="2.200"/><rect x="10.500" y="11" width="19.500" height="8" rx="2.200"/></svg>
  <svg class="abs" style="left:252px;top:1091px" width="22" height="19" viewBox="0 0 22 19" fill="#6b6b95"><rect width="9.500" height="8" rx="2.200"/><rect x="12" width="9.500" height="8" rx="2.200"/><rect y="11" width="9.500" height="8" rx="2.200"/><rect x="12" y="11" width="9.500" height="8" rx="2.200"/></svg>
</div>

<!-- ================= WORKSPACE ================= -->
<div id="work" class="abs">
  <!-- close pill -->
  <div class="abs" style="left:621px;top:81px;width:387px;height:58px;border-radius:29px;background:#fff;border:1px solid #e4e3ec;box-shadow:0 4px 18px rgba(90,70,50,.09)"></div>
  <svg class="abs" style="left:665px;top:105px" width="12" height="12" viewBox="0 0 14 14" stroke="#2d2d5f" stroke-width="3" stroke-linecap="round"><path d="M1.500 1.500l11 11M12.500 1.500l-11 11"/></svg>
  <div class="t" id="closep" style="left:693px;top:98px;font-size:26px;color:#2d2d5f;letter-spacing:0.3px;-webkit-text-stroke:.4px #2d2d5f;transform:scaleX(0.9870);transform-origin:0 0">Close properties panel</div>
  <div class="abs" style="left:1024px;top:81px;width:57px;height:58px;border-radius:50%;background:#fff;border:1px solid #e4e3ec;box-shadow:0 4px 18px rgba(90,70,50,.09)"></div>
  <svg class="abs" style="left:1042px;top:100px" width="21" height="22" viewBox="0 0 21 22" fill="none" stroke="#14143c" stroke-width="2" stroke-linejoin="round" stroke-linecap="round"><path d="M10.500 1.200 19.500 6 10.500 10.800 1.500 6z"/><path d="M1.500 10.300 10.500 15l9-4.700M1.500 14.600l9 4.700 9-4.700"/></svg>

  <!-- left collapse tab -->
  <div class="abs" style="left:-1px;top:485px;width:36px;height:165px;background:#fff;border:1px solid #edebf0;border-left:none;border-radius:0 36px 36px 0 / 0 46px 46px 0"></div>
  <svg class="abs" style="left:11px;top:560px" width="10" height="16" viewBox="0 0 10 16" fill="none" stroke="#0a0a45" stroke-width="2.800" stroke-linecap="round" stroke-linejoin="round"><path d="M2 2l6 6-6 6"/></svg>
  <!-- right collapse tab -->
  <div class="abs" style="left:1665px;top:485px;width:36px;height:165px;background:#faf6f5;border:1px solid #f0ecec;border-right:none;border-radius:36px 0 0 36px / 46px 0 0 46px"></div>
  <svg class="abs" style="left:1678px;top:560px" width="10" height="16" viewBox="0 0 10 16" fill="none" stroke="#0a0a45" stroke-width="2.800" stroke-linecap="round" stroke-linejoin="round"><path d="M2 2l6 6-6 6"/></svg>
  <!-- play arrow -->
  <svg class="abs" style="left:1653px;top:988px" width="16" height="21" viewBox="0 0 16 21" fill="#000"><path d="M0 0v21l16-10.500z"/></svg>
  <!-- bottom collapse tab -->
  <svg class="abs" style="left:1030px;top:1098px" width="190" height="37" viewBox="0 0 190 37"><path d="M0 37C12 37 12 25 14 18 17 6 26 1 40 1h110c14 0 23 5 26 17 2 7 2 19 14 19z" fill="#f4f0f2"/><path d="M88 15l6.500 6 6.500-6" fill="none" stroke="#14143c" stroke-width="2.800" stroke-linecap="round" stroke-linejoin="round"/></svg>

  <!-- ============ CANVAS ============ -->
  <div class="abs" id="canvas" style="left:87px;top:168px;width:1527px;height:858px;background:#2b4f36;border:3px solid #4fc6c9;box-shadow:0 1px 26px rgba(90,60,40,.22);overflow:hidden">
    <!-- all children positioned in page coords minus (549,256) -->
    <div class="abs" style="left:0;top:0;width:0;height:0;transform:translate(-549px,-256px)">
      <!-- frame -->
      <div class="abs" style="left:611px;top:320px;width:1399px;height:726px;border:3px solid #8de05b;border-radius:34px;overflow:hidden">
        <svg class="abs" style="left:850px;top:0" width="543" height="720" viewBox="0 0 543 720"><use href="#photo"/></svg>
      </div>
      <div class="abs" style="left:609px;top:690px;width:7px;height:52px;background:#2b4f36"></div>
      <!-- logo -->
      <div class="abs" style="left:722px;top:405px;width:50px;height:50px;border-radius:50%;background:#fff"></div>
      <div class="t" id="logon" style="left:732px;top:399px;font-size:52px;font-weight:bold;font-style:italic;color:#2b4f36;letter-spacing:0">n</div>
      <div class="t" id="logot" style="left:781px;top:413px;font-size:29.500px;color:#fff;letter-spacing:5.600px;-webkit-text-stroke:.5px #fff">northpoint</div>
      <!-- title -->
      <div class="t" id="title1" style="left:709.400px;top:621px;font-size:99px;font-weight:bold;color:#a9fb72;letter-spacing:1px;-webkit-text-stroke:1.6px #a9fb72;transform:scaleX(1.0473);transform-origin:0 0">Inside Our</div>
      <div class="t" id="title2" style="left:711px;top:716px;font-size:99px;font-weight:bold;color:#a9fb72;letter-spacing:2px;-webkit-text-stroke:1.6px #a9fb72;transform:scaleX(1.1000);transform-origin:0 0">Team</div>
      <div class="abs" style="left:715px;top:846px;width:535px;height:4px;background:#9ff06a"></div>
      <div class="t" id="sub1" style="left:713px;top:879px;font-size:36.5px;color:#f1f6f1;letter-spacing:1.0px;transform:scaleX(1.0240);transform-origin:0 0">Operations &amp; Delivery</div>
      <div class="t" id="sub2" style="left:713px;top:923px;font-size:36.5px;color:#f1f6f1;letter-spacing:1.2px;transform:scaleX(1.0480);transform-origin:0 0">at Our Company</div>
    </div>
  </div>
</div>

<!-- ================= PROPERTIES ================= -->
<div id="props" class="abs"><div class="abs" style="left:-1px;top:0;width:0;height:0">
  <div class="t" id="pv1" style="left:29px;top:63px;font-size:22.5px;font-weight:bold;color:#9c9cba;letter-spacing:1.6px;transform:scaleX(0.9649);transform-origin:0 0">SOUNDTRACK VOLUME</div>
  <div class="t" id="pv2" style="left:29px;top:119px;font-size:22.5px;color:#7f7fa6;letter-spacing:0.2px;-webkit-text-stroke:.3px #7f7fa6;transform:scaleX(0.9533);transform-origin:0 0">Classical - Les Toreadors</div>
  <div class="abs" style="left:30px;top:174px;width:72px;height:72px;border:3px solid #d6d7da;border-radius:7px;background:#fbf8f7"></div>
  <svg class="abs" style="left:30px;top:174px" width="72" height="72" viewBox="0 0 72 72" fill="none"><path d="M24.300 47.300 49.200 23" stroke="#7f7d7e" stroke-width="2.700"/><path d="M25.300 31.600h4.600L34.600 27.700V44.500L29.900 39.400H25.300z" fill="#7f7d7e"/><rect x="34.600" y="27" width="2.300" height="18.500" fill="#fbf8f7"/><path d="M38.700 32.300A4.500 4.500 0 0 1 38.700 40.100" stroke="#7f7d7e" stroke-width="3"/><path d="M40.200 27.300A10.200 10.200 0 0 1 40.200 45.100" stroke="#7f7d7e" stroke-width="2.800"/></svg>
  <div class="abs" style="left:131px;top:202.500px;width:594px;height:15px;border-radius:8px;background:#e6e6ec"></div>
  <div class="abs" style="left:131px;top:202.500px;width:300px;height:15px;border-radius:8px;background:#8b87f6"></div>
  <div class="abs" style="left:411.500px;top:193.500px;width:33px;height:33px;border-radius:50%;background:#8b87f6"></div>
  <div class="abs" style="left:754px;top:174px;width:81px;height:72px;border:3px solid #d6d7da;border-radius:7px;background:#fbf8f7"></div>
  <div class="t" id="pv5" style="left:754px;top:196px;width:80px;text-align:center;font-size:29px;color:#000;-webkit-text-stroke:.4px #000">5</div>
  <!-- fade in -->
  <svg class="abs" style="left:49px;top:295px" width="25" height="25" viewBox="0 0 25 25" fill="#7d7d7d"><rect x="0" y="16" width="3.600" height="9"/><rect x="7" y="10.500" width="3.600" height="14.500"/><rect x="14" y="5" width="3.600" height="20"/><rect x="21" y="0" width="3.600" height="25"/></svg>
  <div class="t" id="pv3" style="left:99px;top:295px;font-size:28.5px;color:#7d7d7d;letter-spacing:0.5px;-webkit-text-stroke:.4px #7d7d7d;transform:scaleX(0.9586);transform-origin:0 0">Fade in</div>
  <div class="t" id="pv4" style="left:650px;top:295px;font-size:28.5px;color:#7d7d7d;letter-spacing:0.8px;-webkit-text-stroke:.4px #7d7d7d;transform:scaleX(0.9822);transform-origin:0 0">Fade out</div>
  <div class="abs" style="left:781px;top:287px;width:43px;height:43px;border-radius:7px;background:#dddcfb"></div>
  <svg class="abs" style="left:790px;top:295px" width="25" height="26" viewBox="0 0 25 26" fill="#5b57f3"><rect x="0" y="0" width="3.600" height="26"/><rect x="7" y="6" width="3.600" height="20"/><rect x="14" y="12" width="3.600" height="14"/><rect x="21" y="17" width="3.600" height="9"/></svg>
  <!-- replace soundtrack -->
  <div class="abs" style="left:30px;top:376px;width:806px;height:83px;border-radius:9px;background:#e8eaee"></div>
  <div class="t" id="pv6" style="left:30px;top:403px;width:806px;text-align:center;font-size:28.500px;font-weight:bold;color:#343941;letter-spacing:.35px;transform:scaleX(0.9899);transform-origin:50% 0">Replace soundtrack</div>
  <div class="abs" style="left:30px;top:502px;width:806px;height:83px;border-radius:9px;background:#e8eaee"></div>
  <svg class="abs" style="left:419px;top:524px" width="29" height="30" viewBox="0 0 29 30" fill="none" stroke="#343941" stroke-width="3.200"><path d="M0 6.500h29" stroke-width="3.600"/><path d="M9.500 3h10" stroke-width="5"/><path d="M5.500 9v18.500h18V9"/></svg>
</div></div>

<!-- ================= TIMELINE ================= -->
<div id="tl" class="abs">
<div class="abs" style="left:0;top:0;width:173px;height:310px;background:#fefcfc;border-top:1px solid #eae7eb;border-left:1px solid #eeebf0"></div>
<div class="t" id="tl375" style="left:65px;top:12px;font-size:18px;color:#7b7b9e;-webkit-text-stroke:.3px #7b7b9e;letter-spacing:0px;transform:scaleX(0.9308);transform-origin:0 0">37.5s</div>
<svg class="abs" style="left:36px;top:77px" width="38" height="36" viewBox="0 0 38 36" fill="#6b6b95"><rect x="0" y="0" width="10" height="36" rx="2"/><path d="M38 2.500v31c0 1.600-1.700 2.400-3 1.500L11.500 19.500c-1-.7-1-2.300 0-3L35 1c1.300-.9 3-.1 3 1.500z"/></svg>
<svg class="abs" style="left:101px;top:68px" width="41" height="51" viewBox="0 0 41 51" fill="#34346a"><path d="M0 3.500v44c0 2.400 2.600 3.800 4.600 2.500l34.500-22c1.800-1.200 1.800-3.800 0-5L4.600 1C2.600-.3 0 1.100 0 3.500z"/></svg>
<svg class="abs" style="left:75px;top:163px" width="23" height="33" viewBox="0 0 23 33" fill="none" stroke="#6b6b95" stroke-linecap="round"><rect x="5.500" y="0" width="12" height="20" rx="6" fill="#6b6b95" stroke="none"/><path d="M1.500 13.500v1.500a10 10 0 0 0 20 0v-1.500M11.500 25.500v5M4 31.500h15" stroke-width="2.800"/></svg>
<svg class="abs" style="left:72px;top:231px" width="30" height="29" viewBox="0 0 30 29" fill="#6b6b95"><circle cx="5" cy="24" r="5"/><circle cx="24" cy="23" r="5"/><path d="M6.500 24V2.800C6.500 1.200 7.700 0 9.300 0H26.200C27.800 0 29 1.200 29 2.800V23h-3.600V4.800H10.100V24z"/></svg>
<svg class="abs" style="left:1px;top:0" width="2880" height="30" fill="#cfcdd7"><rect x="172.5" y="0" width="2" height="28"/><rect x="244.4" y="0" width="2" height="13"/><rect x="316.4" y="0" width="2" height="13"/><rect x="388.4" y="0" width="2" height="13"/><rect x="460.3" y="0" width="2" height="13"/><rect x="532.2" y="0" width="2" height="28"/><rect x="604.2" y="0" width="2" height="13"/><rect x="676.2" y="0" width="2" height="13"/><rect x="748.1" y="0" width="2" height="13"/><rect x="820.1" y="0" width="2" height="13"/><rect x="892.0" y="0" width="2" height="28"/><rect x="964.0" y="0" width="2" height="13"/><rect x="1035.9" y="0" width="2" height="13"/><rect x="1107.8" y="0" width="2" height="13"/><rect x="1179.8" y="0" width="2" height="13"/><rect x="1251.8" y="0" width="2" height="28"/><rect x="1323.7" y="0" width="2" height="13"/><rect x="1395.7" y="0" width="2" height="13"/><rect x="1467.6" y="0" width="2" height="13"/><rect x="1539.5" y="0" width="2" height="13"/><rect x="1611.5" y="0" width="2" height="28"/><rect x="1683.5" y="0" width="2" height="13"/><rect x="1755.4" y="0" width="2" height="13"/><rect x="1827.4" y="0" width="2" height="13"/><rect x="1899.3" y="0" width="2" height="13"/><rect x="1971.2" y="0" width="2" height="28"/><rect x="2043.2" y="0" width="2" height="13"/><rect x="2115.2" y="0" width="2" height="13"/><rect x="2187.1" y="0" width="2" height="13"/><rect x="2259.1" y="0" width="2" height="13"/><rect x="2331.0" y="0" width="2" height="28"/><rect x="2403.0" y="0" width="2" height="13"/><rect x="2474.9" y="0" width="2" height="13"/><rect x="2546.8" y="0" width="2" height="13"/><rect x="2618.8" y="0" width="2" height="13"/></svg>
<div class="t rl" style="left:180px;top:12px">0s</div>
<div class="t rl" style="left:539px;top:12px">5s</div>
<div class="t rl" style="left:899px;top:12px">10s</div>
<div class="t rl" style="left:1259px;top:12px">15s</div>
<div class="t rl" style="left:1618px;top:12px">20s</div>
<div class="t rl" style="left:1978px;top:12px">25s</div>
<div class="t rl" style="left:2338px;top:12px">30s</div>
<div class="abs" style="left:176px;top:173px;width:2480px;height:35px;background:#ece8e8"></div>
<div class="abs" style="left:174px;top:43px;width:285px;height:116px;border-radius:12px;background:#5fcdd1"></div>
<div class="abs clip" style="left:177px;top:46px;width:279px;background:#2b4f36;"></div>
<div class="abs band" style="left:175px;top:72px;width:283px;background:rgba(255,255,255,.8);"><svg class="abs ci" style="left:19px" width="34" height="30" viewBox="0 0 34 30" fill="none" stroke="#34386c" stroke-width="2.600" stroke-linecap="round" stroke-linejoin="round"><path d="M5 9.500H3.500a2 2 0 0 0-2 2V26a2 2 0 0 0 2 2H12"/><rect x="8.700" y="1.500" width="16" height="12.500" rx="2" fill="#34386c" stroke="none"/><path d="M10.500 12l3.600-5 2.600 3 2-2 3.300 4z" fill="#fff" stroke="none"/><circle cx="20.500" cy="5" r="1.300" fill="#fff" stroke="none"/><path d="M7.500 16.500v7.500l5.500-3.800z" fill="#34386c" stroke="none"/><circle cx="20.500" cy="25.500" r="3" fill="#34386c" stroke="none"/><circle cx="30" cy="23.500" r="3" fill="#34386c" stroke="none"/><path d="M22.300 25.500V16l9.700-1.500v9"/></svg><div class="t ct" id="ct0" style="left:73px;transform:scaleX(0.9465);transform-origin:0 0">Inside ...</div><div class="abs db" style="left:180px;background:#f8f3f3"><span>7</span><svg width="19" height="12" viewBox="0 0 17 11" fill="none" stroke="#34386c" stroke-width="3" stroke-linecap="round" stroke-linejoin="round"><path d="M2 2l6.500 6.500L15 2"/></svg></div></div>
<div class="abs clip" style="left:464px;top:46px;width:459px;background:#fff;"></div>
<div class="abs band" style="left:462px;top:72px;width:463px;background:#fff;box-shadow:0 4px 14px rgba(60,40,40,.10);"><svg class="abs ci" style="left:19px" width="34" height="30" viewBox="0 0 34 30" fill="none" stroke="#34386c" stroke-width="2.600" stroke-linecap="round" stroke-linejoin="round"><path d="M5 9.500H3.500a2 2 0 0 0-2 2V26a2 2 0 0 0 2 2H12"/><rect x="8.700" y="1.500" width="16" height="12.500" rx="2" fill="#34386c" stroke="none"/><path d="M10.500 12l3.600-5 2.600 3 2-2 3.300 4z" fill="#fff" stroke="none"/><circle cx="20.500" cy="5" r="1.300" fill="#fff" stroke="none"/><path d="M7.500 16.500v7.500l5.500-3.800z" fill="#34386c" stroke="none"/><circle cx="20.500" cy="25.500" r="3" fill="#34386c" stroke="none"/><circle cx="30" cy="23.500" r="3" fill="#34386c" stroke="none"/><path d="M22.300 25.500V16l9.700-1.500v9"/></svg><div class="t ct" id="ct1" style="left:73px;transform:scaleX(0.9950);transform-origin:0 0">We connect people, p...</div><div class="abs db" style="left:360px;background:#faf6f5"><span>7</span><svg width="19" height="12" viewBox="0 0 17 11" fill="none" stroke="#34386c" stroke-width="3" stroke-linecap="round" stroke-linejoin="round"><path d="M2 2l6.500 6.500L15 2"/></svg></div></div>
<div class="abs clip" style="left:933px;top:46px;width:278px;background:#2b4f36;"></div>
<div class="abs band" style="left:931px;top:72px;width:282px;background:rgba(255,255,255,.8);"><svg class="abs ci" style="left:19px" width="34" height="30" viewBox="0 0 34 30" fill="none" stroke="#34386c" stroke-width="2.600" stroke-linecap="round" stroke-linejoin="round"><path d="M5 9.500H3.500a2 2 0 0 0-2 2V26a2 2 0 0 0 2 2H12"/><rect x="8.700" y="1.500" width="16" height="12.500" rx="2" fill="#34386c" stroke="none"/><path d="M10.500 12l3.600-5 2.600 3 2-2 3.300 4z" fill="#fff" stroke="none"/><circle cx="20.500" cy="5" r="1.300" fill="#fff" stroke="none"/><path d="M7.500 16.500v7.500l5.500-3.800z" fill="#34386c" stroke="none"/><circle cx="20.500" cy="25.500" r="3" fill="#34386c" stroke="none"/><circle cx="30" cy="23.500" r="3" fill="#34386c" stroke="none"/><path d="M22.300 25.500V16l9.700-1.500v9"/></svg><div class="t ct" id="ct2" style="left:73px;transform:scaleX(0.9270);transform-origin:0 0">Every ...</div><div class="abs db" style="left:179px;background:#f8f3f3"><span>7</span><svg width="19" height="12" viewBox="0 0 17 11" fill="none" stroke="#34386c" stroke-width="3" stroke-linecap="round" stroke-linejoin="round"><path d="M2 2l6.500 6.500L15 2"/></svg></div></div>
<div class="abs clip" style="left:1220px;top:46px;width:279px;background:#a9fb72;"></div>
<div class="abs band" style="left:1218px;top:72px;width:283px;background:rgba(255,255,255,.8);"><svg class="abs ci" style="left:19px" width="34" height="30" viewBox="0 0 34 30" fill="none" stroke="#34386c" stroke-width="2.600" stroke-linecap="round" stroke-linejoin="round"><path d="M5 9.500H3.500a2 2 0 0 0-2 2V26a2 2 0 0 0 2 2H12"/><rect x="8.700" y="1.500" width="16" height="12.500" rx="2" fill="#34386c" stroke="none"/><path d="M10.500 12l3.600-5 2.600 3 2-2 3.300 4z" fill="#fff" stroke="none"/><circle cx="20.500" cy="5" r="1.300" fill="#fff" stroke="none"/><path d="M7.500 16.500v7.500l5.500-3.800z" fill="#34386c" stroke="none"/><circle cx="20.500" cy="25.500" r="3" fill="#34386c" stroke="none"/><circle cx="30" cy="23.500" r="3" fill="#34386c" stroke="none"/><path d="M22.300 25.500V16l9.700-1.500v9"/></svg><div class="t ct" id="ct3" style="left:73px;transform:scaleX(0.9695);transform-origin:0 0">Strong...</div><div class="abs db" style="left:180px;background:#f1fde8"><span>4</span><svg width="19" height="12" viewBox="0 0 17 11" fill="none" stroke="#34386c" stroke-width="3" stroke-linecap="round" stroke-linejoin="round"><path d="M2 2l6.500 6.500L15 2"/></svg></div></div>
<div class="abs clip" style="left:1508px;top:46px;width:280px;background:#16281d;background:linear-gradient(90deg,#0f2016 0,#1a3323 7%,#13271a 14%,#1b3524 20%,#132819 24%,#08150d 25%,#08150d 30%,#1d3a28 31%,#1a3525 38%,#244631 47%,#2a4d37 58%,#23432f 66%,#2b4e38 74%,#22422e 84%,#1a3323 92%,#14281b 100%);"></div>
<div class="abs band" style="left:1506px;top:72px;width:284px;background:rgba(255,255,255,.8);"><svg class="abs ci" style="left:19px" width="34" height="30" viewBox="0 0 34 30" fill="none" stroke="#34386c" stroke-width="2.600" stroke-linecap="round" stroke-linejoin="round"><path d="M5 9.500H3.500a2 2 0 0 0-2 2V26a2 2 0 0 0 2 2H12"/><rect x="8.700" y="1.500" width="16" height="12.500" rx="2" fill="#34386c" stroke="none"/><path d="M10.500 12l3.600-5 2.600 3 2-2 3.300 4z" fill="#fff" stroke="none"/><circle cx="20.500" cy="5" r="1.300" fill="#fff" stroke="none"/><path d="M7.500 16.500v7.500l5.500-3.800z" fill="#34386c" stroke="none"/><circle cx="20.500" cy="25.500" r="3" fill="#34386c" stroke="none"/><circle cx="30" cy="23.500" r="3" fill="#34386c" stroke="none"/><path d="M22.300 25.500V16l9.700-1.500v9"/></svg><div class="t ct" id="ct4" style="left:73px;transform:scaleX(0.9698);transform-origin:0 0">We wo...</div><div class="abs db" style="left:181px;background:#f8f3f3"><span>4</span><svg width="19" height="12" viewBox="0 0 17 11" fill="none" stroke="#34386c" stroke-width="3" stroke-linecap="round" stroke-linejoin="round"><path d="M2 2l6.500 6.500L15 2"/></svg></div></div>
<div class="abs clip" style="left:1797px;top:46px;width:386px;background:#fff;"></div>
<div class="abs band" style="left:1795px;top:72px;width:390px;background:#fff;box-shadow:0 4px 14px rgba(60,40,40,.10);"><svg class="abs ci" style="left:19px" width="34" height="30" viewBox="0 0 34 30" fill="none" stroke="#34386c" stroke-width="2.600" stroke-linecap="round" stroke-linejoin="round"><path d="M5 9.500H3.500a2 2 0 0 0-2 2V26a2 2 0 0 0 2 2H12"/><rect x="8.700" y="1.500" width="16" height="12.500" rx="2" fill="#34386c" stroke="none"/><path d="M10.500 12l3.600-5 2.600 3 2-2 3.300 4z" fill="#fff" stroke="none"/><circle cx="20.500" cy="5" r="1.300" fill="#fff" stroke="none"/><path d="M7.500 16.500v7.500l5.500-3.800z" fill="#34386c" stroke="none"/><circle cx="20.500" cy="25.500" r="3" fill="#34386c" stroke="none"/><circle cx="30" cy="23.500" r="3" fill="#34386c" stroke="none"/><path d="M22.300 25.500V16l9.700-1.500v9"/></svg><div class="t ct" id="ct5" style="left:73px;transform:scaleX(0.9514);transform-origin:0 0">We see the risks...</div><div class="abs db" style="left:287px;background:#faf6f5"><span>7</span><svg width="19" height="12" viewBox="0 0 17 11" fill="none" stroke="#34386c" stroke-width="3" stroke-linecap="round" stroke-linejoin="round"><path d="M2 2l6.500 6.500L15 2"/></svg></div></div>
<div class="abs clip" style="left:2193px;top:46px;width:278px;background:#2b4f36;"></div>
<div class="abs band" style="left:2191px;top:72px;width:282px;background:rgba(255,255,255,.8);"><svg class="abs ci" style="left:19px" width="34" height="30" viewBox="0 0 34 30" fill="none" stroke="#34386c" stroke-width="2.600" stroke-linecap="round" stroke-linejoin="round"><path d="M5 9.500H3.500a2 2 0 0 0-2 2V26a2 2 0 0 0 2 2H12"/><rect x="8.700" y="1.500" width="16" height="12.500" rx="2" fill="#34386c" stroke="none"/><path d="M10.500 12l3.600-5 2.600 3 2-2 3.300 4z" fill="#fff" stroke="none"/><circle cx="20.500" cy="5" r="1.300" fill="#fff" stroke="none"/><path d="M7.500 16.500v7.500l5.500-3.800z" fill="#34386c" stroke="none"/><circle cx="20.500" cy="25.500" r="3" fill="#34386c" stroke="none"/><circle cx="30" cy="23.500" r="3" fill="#34386c" stroke="none"/><path d="M22.300 25.500V16l9.700-1.500v9"/></svg><div class="t ct" id="ct6" style="left:73px;transform:scaleX(0.9514);transform-origin:0 0">We do...</div><div class="abs db" style="left:179px;background:#f8f3f3"><span>4</span><svg width="19" height="12" viewBox="0 0 17 11" fill="none" stroke="#34386c" stroke-width="3" stroke-linecap="round" stroke-linejoin="round"><path d="M2 2l6.500 6.500L15 2"/></svg></div></div>
<div class="abs clip" style="left:2481px;top:46px;width:280px;background:#2b4f36;"></div>
<div class="abs band" style="left:2479px;top:72px;width:284px;background:rgba(255,255,255,.8);"><svg class="abs ci" style="left:19px" width="34" height="30" viewBox="0 0 34 30" fill="none" stroke="#34386c" stroke-width="2.600" stroke-linecap="round" stroke-linejoin="round"><path d="M5 9.500H3.500a2 2 0 0 0-2 2V26a2 2 0 0 0 2 2H12"/><rect x="8.700" y="1.500" width="16" height="12.500" rx="2" fill="#34386c" stroke="none"/><path d="M10.500 12l3.600-5 2.600 3 2-2 3.300 4z" fill="#fff" stroke="none"/><circle cx="20.500" cy="5" r="1.300" fill="#fff" stroke="none"/><path d="M7.500 16.500v7.500l5.500-3.800z" fill="#34386c" stroke="none"/><circle cx="20.500" cy="25.500" r="3" fill="#34386c" stroke="none"/><circle cx="30" cy="23.500" r="3" fill="#34386c" stroke="none"/><path d="M22.300 25.500V16l9.700-1.500v9"/></svg><div class="t ct" id="ct7" style="left:73px">Smart. Clear. ...</div></div>
<div class="abs" style="left:293.5px;top:18.5px;width:43px;height:43px;border-radius:50%;background:#5fcdd1"></div>
<svg class="abs" style="left:306px;top:34px" width="18" height="12" viewBox="0 0 18 12" fill="none" stroke="#14143c" stroke-width="3.200" stroke-linecap="round" stroke-linejoin="round"><path d="M2 10l7-7 7 7"/></svg>
<div class="abs" style="left:175px;top:225px;width:1231px;height:43px;background:#63cfd3;border-radius:0 9px 9px 0"></div>
<svg class="abs" style="left:178px;top:231px" width="1226" height="30" stroke="rgba(255,255,255,.55)" stroke-width="1.100" fill="none"><path d="M0 12.6v4.8M2 7.3v15.5M4 12.6v4.8M6 11.2v7.5M8 10.7v8.6M10 9.6v10.7M12 4.8v20.4M14 4.4v21.1M16 9.6v10.9M18 8.3v13.4M20 10.1v9.8M22 11.7v6.7M24 8.4v13.2M26 11.0v8.1M28 10.9v8.2M30 8.4v13.1M32 8.2v13.5M34 11.4v7.3M36 8.0v14.0M38 11.2v7.7M40 4.5v21.0M42 11.7v6.6M44 11.5v6.9M46 5.3v19.5M48 9.7v10.5M50 7.8v14.3M52 5.3v19.4M54 11.8v6.4M56 4.4v21.1M58 9.0v12.0M60 11.1v7.8M62 10.3v9.3M64 8.8v12.5M66 9.8v10.5M68 9.2v11.5M70 12.6v4.7M72 12.5v4.9M74 12.3v5.5M76 9.9v10.2M78 7.1v15.8M80 7.9v14.2M82 9.6v10.8M84 11.0v8.0M86 10.9v8.1M88 12.0v6.0M90 10.7v8.6M92 11.0v7.9M94 9.1v11.9M96 10.9v8.1M98 8.9v12.2M100 10.0v9.9M102 11.7v6.5M104 11.8v6.3M106 11.5v7.1M108 9.2v11.6M110 11.7v6.6M112 10.9v8.2M114 10.3v9.3M116 4.2v21.6M118 7.6v14.7M120 7.9v14.2M122 8.3v13.4M124 10.8v8.4M126 12.1v5.8M128 4.3v21.4M130 8.6v12.8M132 4.8v20.3M134 11.2v7.6M136 10.7v8.6M138 10.8v8.3M140 9.9v10.1M142 11.4v7.2M144 11.3v7.3M146 8.5v13.1M148 10.2v9.7M150 12.1v5.8M152 11.6v6.8M154 6.9v16.2M156 12.8v4.3M158 12.4v5.2M160 11.9v6.3M162 10.7v8.6M164 12.0v5.9M166 10.7v8.5M168 12.9v4.2M170 11.2v7.7M172 11.1v7.9M174 11.7v6.7M176 11.2v7.5M178 12.1v5.8M180 13.0v3.9M182 11.2v7.5M184 10.8v8.5M186 12.8v4.4M188 10.2v9.6M190 10.3v9.3M192 6.8v16.3M194 7.0v16.1M196 4.5v21.0M198 10.2v9.5M200 9.1v11.8M202 12.2v5.6M204 9.4v11.3M206 6.2v17.5M208 8.4v13.3M210 11.4v7.2M212 10.4v9.1M214 10.8v8.5M216 10.8v8.4M218 10.1v9.8M220 9.7v10.7M222 10.7v8.6M224 4.8v20.3M226 9.8v10.5M228 11.3v7.5M230 10.0v10.0M232 10.1v9.9M234 10.4v9.2M236 10.2v9.6M238 12.7v4.6M240 12.3v5.4M242 10.6v8.7M244 10.8v8.5M246 9.5v11.1M248 10.7v8.6M250 10.5v9.0M252 10.0v10.0M254 9.4v11.2M256 8.2v13.5M258 11.3v7.3M260 8.4v13.1M262 9.0v12.1M264 7.0v16.0M266 10.9v8.2M268 6.2v17.6M270 10.0v9.9M272 7.8v14.4M274 11.6v6.9M276 11.6v6.8M278 11.7v6.7M280 8.9v12.3M282 9.7v10.7M284 10.9v8.1M286 9.1v11.9M288 10.5v9.0M290 9.4v11.3M292 10.1v9.8M294 9.9v10.3M296 10.6v8.8M298 11.5v7.0M300 11.6v6.8M302 4.9v20.1M304 11.8v6.5M306 12.7v4.6M308 12.9v4.2M310 11.2v7.6M312 12.4v5.2M314 12.2v5.7M316 6.9v16.1M318 11.3v7.4M320 12.6v4.8M322 11.2v7.5M324 12.7v4.6M326 12.3v5.4M328 4.6v20.7M330 11.1v7.8M332 11.9v6.2M334 10.7v8.5M336 10.8v8.4M338 12.4v5.2M340 10.1v9.7M342 11.5v7.1M344 10.9v8.1M346 10.8v8.4M348 11.9v6.3M350 12.1v5.8M352 12.2v5.5M354 10.7v8.6M356 11.5v7.0M358 7.9v14.2M360 10.6v8.9M362 8.2v13.6M364 9.9v10.2M366 12.2v5.5M368 11.2v7.7M370 11.4v7.3M372 11.5v6.9M374 12.5v4.9M376 11.7v6.7M378 10.8v8.3M380 12.8v4.5M382 12.7v4.7M384 13.6v2.8M386 14.2v1.6M388 7.2v15.5M390 13.9v2.3M392 13.9v2.3M394 13.3v3.5M396 13.8v2.4M398 13.8v2.5M400 13.5v3.0M402 13.3v3.3M404 13.9v2.2M406 12.9v4.2M408 13.6v2.9M410 7.0v16.0M412 5.1v19.7M414 13.6v2.8M416 12.6v4.7M418 13.5v3.1M420 6.3v17.3M422 12.8v4.4M424 11.4v7.1M426 11.9v6.1M428 11.8v6.5M430 12.4v5.3M432 11.7v6.5M434 11.7v6.6M436 12.2v5.6M438 5.8v18.5M440 6.5v17.0M442 11.0v8.0M444 11.0v7.9M446 11.1v7.8M448 11.5v7.0M450 11.6v6.8M452 12.2v5.6M454 13.8v2.4M456 13.9v2.2M458 13.0v4.0M460 11.8v6.3M462 11.9v6.2M464 13.4v3.1M466 13.9v2.1M468 5.8v18.5M470 13.4v3.2M472 13.2v3.6M474 13.7v2.7M476 13.4v3.2M478 13.7v2.6M480 6.2v17.7M482 14.0v2.1M484 13.1v3.8M486 13.3v3.3M488 12.4v5.2M490 13.2v3.6M492 11.3v7.4M494 10.7v8.5M496 11.3v7.3M498 8.6v12.9M500 10.4v9.3M502 10.8v8.4M504 12.0v6.0M506 10.6v8.7M508 10.7v8.6M510 12.0v5.9M512 11.9v6.2M514 6.8v16.4M516 10.4v9.3M518 8.7v12.6M520 11.5v7.0M522 10.6v8.7M524 11.1v7.8M526 8.5v13.1M528 6.9v16.3M530 10.1v9.9M532 12.0v6.0M534 9.3v11.3M536 12.2v5.6M538 11.3v7.5M540 6.3v17.5M542 11.4v7.1M544 13.6v2.9M546 12.0v6.1M548 12.6v4.9M550 10.5v8.9M552 10.7v8.6M554 13.0v4.1M556 9.3v11.5M558 8.8v12.4M560 10.7v8.6M562 12.0v5.9M564 9.9v10.3M566 10.5v9.0M568 8.5v12.9M570 10.6v8.8M572 8.7v12.6M574 12.0v5.9M576 9.9v10.2M578 8.0v14.0M580 10.4v9.1M582 7.8v14.5M584 8.6v12.8M586 9.3v11.5M588 9.3v11.4M590 11.6v6.8M592 12.5v5.0M594 13.1v3.8M596 13.2v3.7M598 12.4v5.2M600 13.8v2.5M602 14.0v2.0M604 6.5v17.0M606 13.6v2.7M608 12.9v4.2M610 4.8v20.4M612 14.1v1.8M614 13.9v2.2M616 13.3v3.4M618 12.5v4.9M620 14.1v1.7M622 6.7v16.7M624 12.2v5.6M626 13.7v2.7M628 13.2v3.6M630 13.9v2.1M632 13.2v3.6M634 13.3v3.4M636 13.3v3.4M638 11.0v7.9M640 10.1v9.9M642 4.1v21.9M644 10.7v8.7M646 11.7v6.5M648 11.2v7.6M650 12.6v4.8M652 12.5v5.0M654 11.7v6.7M656 12.4v5.3M658 9.7v10.5M660 11.5v7.1M662 12.3v5.3M664 11.2v7.5M666 9.3v11.3M668 10.9v8.2M670 10.1v9.8M672 11.9v6.2M674 4.5v21.0M676 7.9v14.1M678 10.3v9.4M680 9.2v11.6M682 11.6v6.8M684 11.5v7.1M686 10.1v9.9M688 11.3v7.3M690 12.8v4.5M692 13.1v3.7M694 11.0v8.0M696 9.3v11.5M698 10.0v10.0M700 10.6v8.9M702 10.8v8.4M704 7.2v15.6M706 12.2v5.6M708 11.5v7.0M710 10.9v8.3M712 4.1v21.9M714 11.8v6.3M716 7.3v15.5M718 10.2v9.5M720 10.6v8.8M722 8.1v13.8M724 11.8v6.4M726 9.2v11.6M728 12.3v5.5M730 9.4v11.2M732 9.4v11.1M734 12.1v5.8M736 11.9v6.3M738 10.8v8.4M740 8.2v13.6M742 12.1v5.7M744 11.8v6.4M746 10.0v10.0M748 10.6v8.9M750 5.7v18.7M752 11.6v6.8M754 13.3v3.4M756 14.0v2.1M758 13.6v2.8M760 13.8v2.3M762 13.5v2.9M764 13.3v3.3M766 13.2v3.5M768 12.7v4.7M770 13.3v3.4M772 13.6v2.9M774 12.7v4.7M776 11.4v7.2M778 11.7v6.6M780 11.8v6.4M782 12.5v5.0M784 10.7v8.7M786 10.2v9.6M788 8.4v13.2M790 9.5v11.0M792 9.4v11.2M794 9.0v12.1M796 5.1v19.9M798 10.6v8.7M800 11.0v8.0M802 10.4v9.3M804 10.7v8.7M806 10.8v8.4M808 10.2v9.5M810 11.3v7.3M812 12.4v5.3M814 9.8v10.4M816 6.4v17.2M818 10.1v9.8M820 10.8v8.3M822 9.6v10.9M824 11.0v8.0M826 10.0v10.1M828 5.0v20.0M830 11.7v6.6M832 10.7v8.7M834 9.8v10.5M836 10.9v8.1M838 10.0v10.0M840 8.8v12.3M842 9.7v10.6M844 12.0v5.9M846 10.5v9.1M848 9.2v11.6M850 12.5v5.1M852 8.6v12.7M854 9.2v11.6M856 10.1v9.8M858 10.3v9.5M860 12.6v4.9M862 7.0v15.9M864 10.8v8.5M866 9.3v11.3M868 12.1v5.8M870 5.6v18.8M872 8.1v13.8M874 10.3v9.3M876 9.2v11.6M878 10.6v8.8M880 11.7v6.6M882 11.9v6.2M884 10.9v8.2M886 13.3v3.5M888 12.4v5.3M890 11.8v6.3M892 11.6v6.7M894 13.2v3.7M896 13.1v3.9M898 11.5v6.9M900 11.4v7.2M902 11.7v6.6M904 12.8v4.5M906 5.7v18.5M908 12.4v5.1M910 13.3v3.4M912 12.5v4.9M914 13.5v3.0M916 4.1v21.8M918 14.2v1.6M920 13.4v3.2M922 14.0v1.9M924 7.1v15.9M926 12.5v5.0M928 12.7v4.6M930 6.3v17.4M932 13.0v3.9M934 13.2v3.7M936 11.5v7.0M938 6.5v17.0M940 12.6v4.7M942 14.0v2.1M944 13.7v2.6M946 13.5v3.0M948 13.5v3.0M950 13.5v3.0M952 14.1v1.9M954 13.4v3.2M956 13.5v3.1M958 13.8v2.5M960 13.9v2.2M962 12.8v4.3M964 12.2v5.7M966 12.9v4.1M968 12.5v4.9M970 11.4v7.2M972 10.2v9.6M974 9.0v11.9M976 10.9v8.2M978 12.7v4.5M980 11.7v6.5M982 12.9v4.1M984 12.9v4.3M986 11.8v6.5M988 13.5v3.1M990 13.0v3.9M992 12.6v4.7M994 6.5v17.1M996 13.8v2.4M998 11.7v6.6M1000 4.3v21.4M1002 13.9v2.3M1004 13.3v3.4M1006 14.0v2.0M1008 13.8v2.3M1010 13.8v2.3M1012 14.1v1.9M1014 14.0v1.9M1016 14.0v2.1M1018 13.9v2.1M1020 13.5v3.1M1022 13.3v3.3M1024 13.4v3.2M1026 13.7v2.5M1028 13.9v2.2M1030 13.7v2.6M1032 13.8v2.4M1034 13.8v2.3M1036 13.4v3.3M1038 5.5v19.0M1040 12.0v6.0M1042 13.1v3.7M1044 12.0v5.9M1046 11.4v7.1M1048 10.8v8.3M1050 7.0v16.0M1052 12.6v4.8M1054 13.4v3.3M1056 13.6v2.9M1058 13.5v2.9M1060 13.2v3.5M1062 14.1v1.8M1064 13.5v2.9M1066 13.2v3.5M1068 13.4v3.1M1070 12.9v4.3M1072 14.0v2.1M1074 13.2v3.6M1076 12.7v4.5M1078 12.9v4.1M1080 14.2v1.7M1082 13.2v3.6M1084 12.9v4.3M1086 13.5v2.9M1088 12.9v4.1M1090 13.4v3.2M1092 13.5v3.0M1094 13.1v3.9M1096 13.5v3.0M1098 13.7v2.5M1100 13.9v2.2M1102 13.9v2.2M1104 14.4v1.3M1106 13.6v2.7M1108 13.7v2.6M1110 14.3v1.5M1112 14.2v1.5M1114 14.1v1.7M1116 13.9v2.3M1118 9.0v12.1M1120 14.0v2.0M1122 14.5v1.0M1124 14.0v1.9M1126 14.1v1.7M1128 14.1v1.7M1130 14.2v1.6M1132 13.8v2.4M1134 14.3v1.3M1136 14.3v1.3M1138 13.1v3.7M1140 13.0v4.0M1142 14.2v1.6M1144 14.1v1.8M1146 13.3v3.5M1148 11.2v7.6M1150 13.8v2.4M1152 13.2v3.6M1154 13.6v2.8M1156 12.8v4.3M1158 13.3v3.4M1160 14.0v1.9M1162 13.8v2.4M1164 12.8v4.5M1166 12.9v4.2M1168 13.3v3.5M1170 13.1v3.8M1172 13.5v3.0M1174 13.5v3.0M1176 14.0v2.1M1178 13.9v2.3M1180 13.7v2.7M1182 13.5v3.0M1184 14.1v1.7M1186 13.7v2.7M1188 13.9v2.1M1190 14.1v1.7M1192 14.0v1.9M1194 14.3v1.3M1196 14.4v1.3M1198 14.4v1.1M1200 14.5v1.0M1202 14.5v1.0M1204 14.5v1.0M1206 14.5v1.0M1208 14.5v1.0M1210 14.5v1.0M1212 14.5v1.0M1214 14.5v1.0M1216 14.5v1.0M1218 14.5v1.0M1220 14.3v1.4M1222 14.5v1.0M1224 14.5v1.0"/></svg>
<div class="abs" style="left:1406px;top:229px;width:115px;height:34px;background:#e5e4ed"></div>
<div class="abs" style="left:1517px;top:225px;width:1300px;height:43px;background:#cfcfe0;border:3px solid #33336b;border-radius:10px"></div>
<svg class="abs" style="left:1756px;top:231px" width="900" height="30" stroke="rgba(255,255,255,.55)" stroke-width="1.100" fill="none"><path d="M0 12.4v5.1M2 12.6v4.8M4 13.1v3.8M6 13.5v3.0M8 12.8v4.4M10 13.4v3.2M12 13.5v3.0M14 7.4v15.1M16 14.3v1.3M18 13.5v2.9M20 13.7v2.7M22 14.0v2.0M24 12.4v5.2M26 13.7v2.6M28 13.6v2.8M30 13.5v3.0M32 13.8v2.4M34 12.3v5.4M36 13.4v3.3M38 7.0v16.0M40 10.4v9.2M42 5.6v18.8M44 12.0v6.1M46 12.1v5.8M48 13.3v3.5M50 13.2v3.5M52 12.8v4.4M54 13.0v4.0M56 13.4v3.2M58 13.4v3.2M60 7.7v14.5M62 13.6v2.9M64 13.4v3.2M66 13.2v3.5M68 14.2v1.6M70 13.7v2.6M72 12.2v5.6M74 11.4v7.2M76 5.1v19.8M78 12.4v5.1M80 12.1v5.8M82 7.3v15.4M84 12.0v5.9M86 12.4v5.3M88 14.0v1.9M90 14.2v1.6M92 14.2v1.7M94 12.4v5.2M96 12.7v4.5M98 14.2v1.6M100 6.1v17.8M102 13.0v4.1M104 13.5v3.0M106 11.2v7.5M108 11.1v7.8M110 11.7v6.7M112 11.8v6.4M114 10.8v8.5M116 10.9v8.1M118 11.4v7.1M120 10.5v9.0M122 10.6v8.8M124 12.1v5.8M126 10.8v8.5M128 10.9v8.2M130 10.0v10.0M132 12.6v4.8M134 13.2v3.5M136 12.4v5.2M138 12.2v5.6M140 12.0v6.0M142 12.4v5.3M144 13.2v3.6M146 10.9v8.3M148 11.9v6.2M150 12.0v6.0M152 11.0v8.1M154 10.6v8.7M156 5.4v19.2M158 11.9v6.1M160 7.6v14.8M162 13.7v2.6M164 6.1v17.8M166 13.0v3.9M168 11.9v6.2M170 13.3v3.5M172 13.9v2.2M174 14.1v1.8M176 13.6v2.9M178 13.4v3.3M180 13.5v3.1M182 13.1v3.7M184 11.0v8.0M186 10.9v8.1M188 11.4v7.2M190 11.1v7.8M192 10.9v8.3M194 9.2v11.6M196 9.8v10.4M198 8.8v12.3M200 11.1v7.7M202 5.6v18.9M204 10.2v9.6M206 10.5v8.9M208 11.9v6.2M210 10.9v8.3M212 7.3v15.3M214 12.1v5.8M216 11.1v7.7M218 11.8v6.5M220 9.1v11.9M222 8.4v13.2M224 11.5v6.9M226 5.1v19.8M228 10.7v8.6M230 10.3v9.3M232 10.8v8.3M234 8.6v12.9M236 11.9v6.2M238 8.7v12.7M240 11.8v6.4M242 11.8v6.3M244 12.1v5.8M246 11.4v7.2M248 12.1v5.8M250 11.1v7.8M252 11.5v7.0M254 12.0v6.0M256 13.0v4.0M258 12.0v6.0M260 10.9v8.1M262 10.6v8.8M264 12.3v5.3M266 11.0v7.9M268 13.3v3.4M270 13.8v2.4M272 12.8v4.3M274 7.4v15.2M276 12.5v5.0M278 13.7v2.6M280 13.5v3.0M282 6.3v17.3M284 13.8v2.4M286 14.2v1.7M288 7.8v14.4M290 12.5v4.9M292 12.8v4.4M294 5.9v18.2M296 13.1v3.9M298 12.2v5.6M300 5.3v19.4M302 11.5v7.1M304 12.1v5.8M306 10.4v9.1M308 11.1v7.7M310 10.8v8.3M312 9.9v10.3M314 9.8v10.5M316 12.1v5.7M318 12.4v5.2M320 9.8v10.4M322 9.6v10.7M324 10.0v9.9M326 8.5v13.0M328 9.2v11.5M330 10.6v8.8M332 7.4v15.2M334 12.8v4.4M336 10.8v8.4M338 10.0v9.9M340 6.2v17.6M342 12.2v5.6M344 10.9v8.1M346 5.2v19.7M348 10.9v8.3M350 11.9v6.2M352 11.8v6.4M354 12.9v4.2M356 12.9v4.1M358 11.2v7.5M360 12.0v6.0M362 13.0v4.0M364 13.0v4.1M366 13.0v4.1M368 13.0v4.0M370 14.0v2.1M372 6.4v17.2M374 13.9v2.1M376 14.1v1.8M378 13.6v2.8M380 12.4v5.2M382 14.0v2.0M384 12.9v4.2M386 13.2v3.6M388 13.1v3.8M390 14.0v1.9M392 7.8v14.4M394 13.6v2.8M396 7.7v14.5M398 13.5v2.9M400 13.8v2.4M402 13.6v2.7M404 14.3v1.5M406 13.4v3.2M408 14.1v1.9M410 13.7v2.6M412 13.8v2.3M414 13.4v3.3M416 7.8v14.5M418 13.8v2.5M420 7.4v15.3M422 14.1v1.7M424 13.0v4.0M426 14.0v2.0M428 14.3v1.5M430 13.3v3.4M432 13.3v3.5M434 13.7v2.6M436 12.0v6.0M438 13.2v3.5M440 13.3v3.3M442 12.6v4.9M444 12.4v5.2M446 11.2v7.6M448 12.9v4.3M450 11.9v6.3M452 13.4v3.3M454 5.8v18.4M456 12.6v4.7M458 11.1v7.7M460 12.9v4.2M462 11.5v7.0M464 11.4v7.3M466 12.3v5.3M468 11.1v7.9M470 11.1v7.7M472 10.0v9.9M474 9.9v10.1M476 9.1v11.9M478 11.9v6.3M480 10.8v8.3M482 11.0v7.9M484 12.1v5.7M486 10.4v9.3M488 12.8v4.5M490 7.7v14.7M492 12.5v4.9M494 11.1v7.8M496 12.5v5.1M498 12.1v5.9M500 11.1v7.8M502 8.8v12.5M504 8.5v13.0M506 12.4v5.1M508 10.8v8.4M510 11.2v7.5M512 6.6v16.8M514 9.3v11.3M516 11.7v6.5M518 11.5v6.9M520 10.1v9.9M522 10.8v8.4M524 12.5v5.0M526 7.2v15.6M528 12.0v6.1M530 8.5v13.0M532 11.1v7.8M534 5.5v19.0M536 10.7v8.6M538 10.3v9.3M540 12.9v4.2M542 11.1v7.8M544 12.7v4.6M546 10.1v9.9M548 12.9v4.3M550 11.9v6.2M552 12.7v4.5M554 11.7v6.6M556 11.3v7.3M558 11.7v6.5M560 11.8v6.4M562 11.2v7.5M564 9.6v10.8M566 12.0v6.0M568 10.3v9.4M570 11.7v6.6M572 12.6v4.8M574 12.8v4.3M576 11.5v7.1M578 12.1v5.9M580 12.2v5.5M582 13.3v3.4M584 10.4v9.3M586 7.0v16.0M588 11.3v7.4M590 11.9v6.2M592 11.1v7.8M594 9.6v10.7M596 11.3v7.5M598 9.2v11.6M600 9.3v11.3M602 9.8v10.4M604 11.9v6.3M606 11.3v7.4M608 11.0v8.0M610 11.8v6.4M612 10.1v9.9M614 9.1v11.8M616 9.9v10.2M618 11.2v7.6M620 10.4v9.2M622 7.9v14.2M624 10.2v9.6M626 12.0v6.0M628 11.5v7.1M630 12.5v5.1M632 12.0v6.0M634 11.8v6.3M636 10.7v8.7M638 12.4v5.1M640 9.7v10.6M642 11.6v6.9M644 10.1v9.9M646 9.3v11.5M648 10.8v8.3M650 8.7v12.6M652 10.6v8.8M654 12.3v5.3M656 9.4v11.3M658 11.1v7.8M660 12.3v5.4M662 5.9v18.2M664 11.9v6.3M666 5.3v19.5M668 9.7v10.6M670 9.3v11.4M672 14.5v1.0M674 14.5v1.0M676 14.5v1.0M678 14.5v1.0M680 14.5v1.0M682 14.5v1.0M684 14.5v1.0M686 14.5v1.0M688 14.5v1.0M690 14.5v1.0M692 14.5v1.0M694 14.5v1.0M696 14.5v1.0M698 11.2v7.5M700 9.4v11.1M702 8.5v13.0M704 11.9v6.1M706 11.8v6.4M708 10.4v9.1M710 10.7v8.6M712 12.0v6.0M714 9.8v10.5M716 12.0v6.0M718 10.3v9.4M720 10.7v8.5M722 7.1v15.7M724 12.0v6.1M726 12.1v5.8M728 12.2v5.5M730 10.8v8.4M732 11.6v6.7M734 10.9v8.2M736 10.2v9.5M738 9.6v10.9M740 11.7v6.7M742 10.4v9.2M744 9.9v10.2M746 11.5v7.0M748 10.6v8.8M750 11.3v7.4M752 10.3v9.4M754 13.3v3.5M756 12.2v5.5M758 12.9v4.2M760 11.4v7.2M762 12.9v4.2M764 13.0v4.0M766 13.1v3.8M768 12.7v4.6M770 14.5v1.0M772 14.5v1.0M774 14.5v1.0M776 14.5v1.0M778 14.5v1.0M780 14.5v1.0M782 14.5v1.0M784 14.5v1.0M786 14.5v1.0M788 14.5v1.0M790 14.5v1.0M792 14.5v1.0M794 14.5v1.0M796 14.5v1.0M798 14.5v1.0M800 14.5v1.0M802 11.4v7.2M804 11.9v6.2M806 12.4v5.2M808 11.8v6.3M810 10.5v9.1M812 12.3v5.5M814 11.4v7.2M816 13.4v3.2M818 12.8v4.3M820 12.8v4.3M822 12.0v6.0M824 11.9v6.2M826 13.4v3.1M828 13.4v3.3M830 6.8v16.4M832 14.3v1.5M834 14.2v1.6M836 13.7v2.7M838 13.7v2.5M840 13.7v2.5M842 13.2v3.6M844 13.2v3.5M846 14.0v1.9M848 14.3v1.3M850 13.4v3.1M852 13.7v2.6M854 13.7v2.6M856 12.6v4.8M858 13.7v2.6M860 13.9v2.3M862 13.4v3.2M864 14.0v2.1M866 13.7v2.6M868 14.0v1.9M870 13.8v2.4M872 6.8v16.3M874 14.3v1.4M876 13.9v2.2M878 14.0v1.9M880 14.0v1.9M882 14.0v1.9M884 13.9v2.2M886 13.4v3.2M888 11.9v6.1M890 12.6v4.9M892 12.0v6.0M894 7.6v14.8M896 13.2v3.6M898 13.0v4.0"/></svg>
<svg class="abs" style="left:1528px;top:235px" width="30" height="24" stroke="rgba(255,255,255,.55)" stroke-width="1.100" fill="none"><path d="M0 10.5v9.1M2 8.5v13.0M4 10.3v9.5M6 11.7v6.6M8 10.8v8.5M10 9.2v11.7M12 7.7v14.5M14 10.8v8.3M16 11.0v8.0"/></svg>
<div class="abs" style="left:181px;top:236px;width:8px;height:21px;border-radius:3px;background:#fff"></div>
<div class="abs" style="left:1386px;top:236px;width:8px;height:21px;border-radius:3px;background:#fff"></div>
<svg class="abs" style="left:197px;top:237px" width="20" height="18" viewBox="0 0 20 18" fill="#2d2d5f"><path d="M1 6h3.500L10 1.500v15L4.500 12H1z"/><path d="M12.500 5.500a4.200 4.200 0 0 1 0 7M15 2.500a8 8 0 0 1 0 13" fill="none" stroke="#2d2d5f" stroke-width="2" stroke-linecap="round"/></svg>
<div class="t" id="st1" style="left:235px;top:237px;font-size:18.5px;color:#2d2d5f;letter-spacing:0.1px;-webkit-text-stroke:.25px #2d2d5f;transform:scaleX(0.9725);transform-origin:0 0">Classical - Les Toreadors</div>
<svg class="abs" style="left:1546px;top:237px" width="20" height="18" viewBox="0 0 20 18" fill="#2d2d5f"><path d="M1 6h3.500L10 1.500v15L4.500 12H1z"/><path d="M12.500 5.500a4.200 4.200 0 0 1 0 7M15 2.500a8 8 0 0 1 0 13" fill="none" stroke="#2d2d5f" stroke-width="2" stroke-linecap="round"/></svg>
<div class="t" id="st2" style="left:1586px;top:237px;font-size:18.5px;color:#2d2d5f;letter-spacing:0.1px;-webkit-text-stroke:.25px #2d2d5f;transform:scaleX(0.9748);transform-origin:0 0">Rock - Big Trouble</div>
<div class="abs tlab" id="tlb1" style="left:173px;top:197px;width:94px">+0.00s</div>
<div class="abs tlab" id="tlb2" style="left:1287px;top:197px;width:116px">-583.09s</div>
<div class="abs" style="left:770.5px;top:204.5px;width:35px;height:35px;border-radius:50%;background:#fff;box-shadow:0 1px 4px rgba(0,0,0,.08)"></div>
<svg class="abs" style="left:780px;top:216.5px" width="16" height="11" viewBox="0 0 16 11" fill="none" stroke="#14143c" stroke-width="3" stroke-linecap="round" stroke-linejoin="round"><path d="M2 9l6-6.500L14 9"/></svg>
<div class="abs" style="left:173px;top:0;width:3px;height:287px;background:#5fcdd1"></div>
<svg class="abs" style="left:173px;top:0" width="15" height="13" viewBox="0 0 15 13" fill="#5fcdd1"><path d="M0 0h15L3 13H0z"/></svg>
<div class="abs" style="left:2649px;top:0;width:231px;height:310px;background:#fefcfc;border-top:1px solid #efecee;box-shadow:-8px 0 12px -6px rgba(60,40,40,.12)"></div>
<div class="abs" style="left:2663px;top:23px;width:139px;height:8px;border-radius:4px;background:#e6e6ec"></div>
<div class="abs" style="left:2663px;top:23px;width:56px;height:8px;border-radius:4px;background:#8b87f6"></div>
<div class="abs" style="left:2706px;top:16px;width:22px;height:22px;border-radius:50%;background:#8b87f6"></div>
<div class="t" id="z80" style="left:2822px;top:18px;font-size:18px;color:#6b6b95;letter-spacing:.2px;transform:scaleX(0.9879);transform-origin:0 0">80%</div>
<div class="abs" style="left:2721px;top:95px;width:86px;height:86px;border-radius:50%;background:#5b57f3;box-shadow:0 6px 16px rgba(91,87,243,.28)"></div>
<svg class="abs" style="left:2742px;top:116px" width="44" height="44" viewBox="0 0 44 44" stroke="#fff" stroke-width="3.200"><path d="M22 0v44M0 22h44"/></svg>
<div class="t" id="addsc2" style="left:2664px;top:198px;width:200px;text-align:center;font-size:21.500px;font-weight:bold;color:#14143c;letter-spacing:.3px;transform:scaleX(0.9268);transform-origin:50% 0">Add scene</div>
</div>

</body>
</html>
